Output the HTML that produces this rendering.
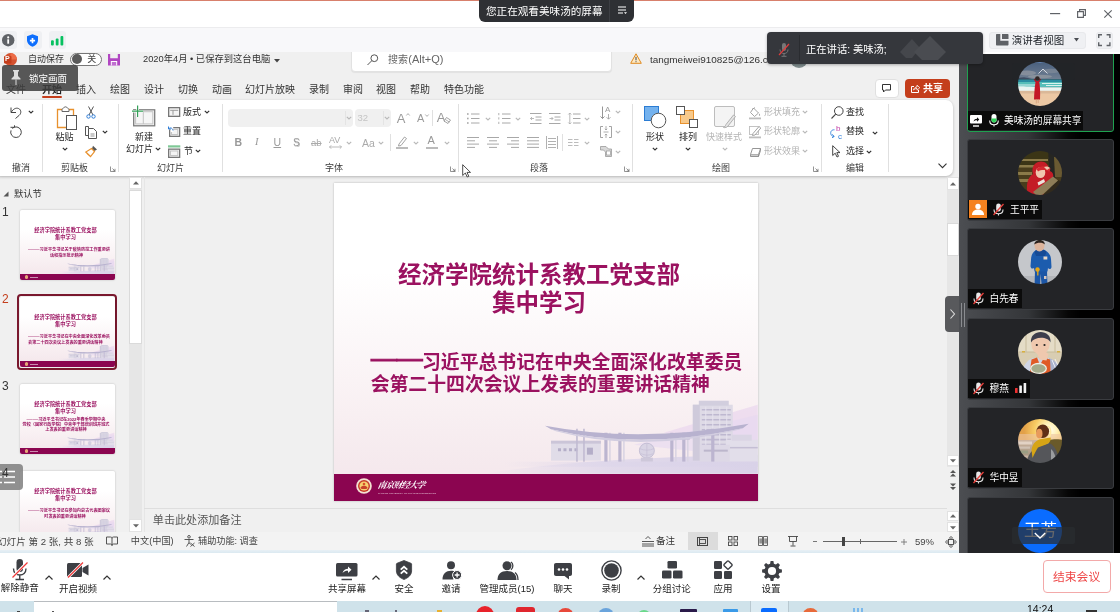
<!DOCTYPE html>
<html lang="zh-CN">
<head>
<meta charset="utf-8">
<title>Meeting</title>
<style>
*{box-sizing:border-box;margin:0;padding:0}
html,body{width:1120px;height:612px;overflow:hidden;background:#fff}
body{position:relative;font-family:"Liberation Sans","Noto Sans CJK SC",sans-serif;font-size:12px;color:#222}
.a{position:absolute}
.t{position:absolute;white-space:nowrap;line-height:1}
svg{position:absolute;overflow:visible}
#topline{left:0;top:0;width:1120px;height:1px;background:#d8806c}
#pill{left:479px;top:0;width:155px;height:22px;background:#2e3034;border-radius:0 0 6px 6px}
#graybar{left:0;top:27px;width:1120px;height:25px;background:#f8f8fa;border-top:1px solid #ececee}
#ppt{left:0;top:52px;width:959px;height:501px;background:#f0f0f0;overflow:hidden}
#ribbon{left:-6px;top:100px;width:959px;height:76px;background:#fff;border-radius:7px;box-shadow:0 1px 3px rgba(0,0,0,.25)}
.tab{top:84px;font-size:10px;color:#333}
.rt{font-size:9px;color:#262626}
.rg{font-size:9px;color:#b4b4b4}
.gl{top:164px;font-size:9px;color:#3a3a3a}
.sep{top:104px;width:1px;height:68px;background:#e0e0e0}
#side{left:959px;top:53.500px;width:161px;height:499.500px;background:linear-gradient(90deg,#4c4e52 0,#45474b 12%,#343639 43%,#060606 68%,#000 75%);overflow:hidden}
.tile{left:8px;width:147px;height:82px;background:#232427;border:1px solid #37393d;border-radius:2px}
.nm{left:1px;bottom:2px;height:19px;background:rgba(8,8,8,.8);color:#fff;font-size:10px;line-height:19px;padding:0 4px 0 24px;white-space:nowrap}
.av{left:51px;top:13px;width:44px;height:44px;border-radius:50%;overflow:hidden}
#tool{left:0;top:553px;width:1120px;height:48px;background:#fff}
.tb{font-size:10px;color:#222;top:581px;transform:translateX(-50%)}
#task{left:0;top:601px;width:1120px;height:11px;background:#cfe2ea}
</style>
</head>
<body><div id="root" class="a" style="left:0;top:0;width:1120px;height:612px;will-change:transform">
<div id="topline" class="a"></div>
<div id="pill" class="a"><span class="t" style="left:7px;top:6px;color:#fff;font-size:10.6px">您正在观看美味汤的屏幕</span><div class="a" style="left:130px;top:0;width:1px;height:22px;background:#3d3f44"></div>
<svg style="left:139px;top:6px" width="9" height="9" viewBox="0 0 9 9"><path d="M0 1H8M0 4H8M0 7H5" stroke="#fff" stroke-width="1.1" fill="none"/><path d="M6 6.3L7.5 8L9 6.3Z" fill="#fff"/></svg>
</div>
<svg style="left:1049.8px;top:13.2px" width="10.2" height="1.2" viewBox="0 0 10.2 1.2"><rect width="10.200" height="1.200" fill="#5f6267"/></svg>
<svg style="left:1077.2px;top:9.4px" width="9" height="9" viewBox="0 0 9 9"><path d="M0.600 2.600H6.400V8.400H0.600ZM2.600 2.600V0.600H8.400V6.400H6.400" fill="none" stroke="#5f6267" stroke-width="1.150"/></svg>
<svg style="left:1104px;top:10px" width="8" height="8" viewBox="0 0 8 8"><path d="M0.300 0.300L7.700 7.700M7.700 0.300L0.300 7.700" fill="none" stroke="#5f6267" stroke-width="1.150"/></svg>
<div id="graybar" class="a"></div>
<div class="a" style="left:-1px;top:31px;width:17.800px;height:18px;background:#eff0f3;border-radius:3px"></div>
<div class="a" style="left:24px;top:31px;width:17.800px;height:18px;background:#eff0f3;border-radius:3px"></div>
<div class="a" style="left:48.5px;top:31px;width:17.800px;height:18px;background:#eff0f3;border-radius:3px"></div>
<svg style="left:1.8px;top:34px" width="12.4" height="12.4" viewBox="0 0 12.4 12.4"><circle cx="6.200" cy="6.200" r="6.200" fill="#5f6267"/><rect x="5.300" y="5.300" width="1.800" height="4.400" fill="#fff"/><circle cx="6.200" cy="3.400" r="1.050" fill="#fff"/></svg>
<svg style="left:27px;top:34px" width="11" height="13" viewBox="0 0 11 13"><path d="M5.500 0.200L11 2.200V6C11 9.500 8.500 11.600 5.500 12.800C2.500 11.600 0 9.500 0 6V2.200Z" fill="#0d6efd"/><path d="M5.500 4V9.200M2.900 6.600H8.100" stroke="#fff" stroke-width="1.700"/></svg>
<svg style="left:50.9px;top:36px" width="12.4" height="9.5" viewBox="0 0 12.4 9.5"><rect x="0" y="4.300" width="2.800" height="5.200" rx="1" fill="#07c160"/><rect x="4.750" y="2.600" width="2.800" height="6.900" rx="1" fill="#07c160"/><rect x="9.500" y="0" width="2.800" height="9.500" rx="1" fill="#07c160"/></svg>
<div class="a" style="left:988.700px;top:31.500px;width:97px;height:17px;background:#eff0f3;border:1px solid #e8e9ec;border-radius:3px"></div>
<svg style="left:996.2px;top:34.4px" width="12.5" height="11.6" viewBox="0 0 12.5 11.6"><path d="M0 1C0 .4 .4 0 1 0H4.300V6.800H12.500V10.600C12.500 11.200 12.100 11.600 11.500 11.600H1C.4 11.600 0 11.200 0 10.600Z" fill="#5f6267"/><path d="M6 0H11.500C12.100 0 12.500 .4 12.500 1V5H6Z" fill="#5f6267"/></svg>
<span class="t" style="left:1011.8px;top:34.8px;font-size:10.500px;color:#1f2329">演讲者视图</span>
<svg style="left:1073.7px;top:38.2px" width="5" height="3.4" viewBox="0 0 5 3.4"><path d="M0 0H5L2.500 3.400Z" fill="#4a4d52"/></svg>
<div class="a" style="left:1095.600px;top:31.500px;width:17.200px;height:17px;background:#eff0f3;border:1px solid #e8e9ec;border-radius:3px"></div>
<svg style="left:1098px;top:34px" width="12.6" height="12.2" viewBox="0 0 12.6 12.2"><path d="M0.700 4V0.700H4M8.600 0.700H11.900V4M11.900 8.200V11.500H8.600M4 11.500H0.700V8.200" fill="none" stroke="#5f6267" stroke-width="1.400"/></svg>
<div id="ppt" class="a" style="top:52px"><div class="a" style="left:0;top:-52px;width:959px;height:553px">
<svg style="left:3.7px;top:53.3px" width="12" height="12" viewBox="0 0 12 12"><circle cx="6.500" cy="6.500" r="6.500" fill="#d35230"/><path d="M6.500 0A6.500 6.500 0 0 1 13 6.500H6.500Z" fill="#ed6c47"/><rect x="0" y="3" width="7.500" height="7.500" rx="1" fill="#c43e1c"/></svg>
<span class="t" style="left:5px;top:55.3px;font-size:7px;font-weight:bold;color:#fff">P</span>
<span class="t" style="left:28px;top:55px;font-size:9px;color:#333">自动保存</span>
<div class="a" style="left:69.500px;top:52.700px;width:32px;height:13px;border:1px solid #777;border-radius:7px;background:#fff"></div>
<div class="a" style="left:71.500px;top:54px;width:10.400px;height:10.400px;border-radius:50%;background:#5a5a5a"></div>
<span class="t" style="left:87.3px;top:55px;font-size:9px;color:#444">关</span>
<svg style="left:108px;top:53.5px" width="12" height="11.5" viewBox="0 0 12 11.5"><path d="M0 0H2.200V4.300H9.800V0H12V11.500H0Z" fill="#b146c2"/><rect x="2.800" y="7" width="6.400" height="4.500" fill="#fff"/><rect x="3.800" y="8" width="4.400" height="3.500" fill="#c070d0"/></svg>
<span class="t" style="left:143px;top:55px;font-size:9.3px;color:#333">2020年4月 • 已保存到这台电脑</span>
<svg style="left:273.5px;top:58.5px" width="5" height="4" viewBox="0 0 5 4"><path d="M0 0H6L3 3.500Z" fill="#444"/></svg>
<div class="a" style="left:350.700px;top:48px;width:261.500px;height:23.600px;background:#fff;border:1px solid #e2e2e2;border-radius:4px;box-shadow:0 1px 1px rgba(0,0,0,.06)"></div>
<svg style="left:367px;top:53.5px" width="11" height="11" viewBox="0 0 11 11"><circle cx="7.300" cy="4.200" r="3.400" fill="none" stroke="#555" stroke-width="1"/><path d="M4.900 6.600L0.500 11" stroke="#555" stroke-width="1"/></svg>
<span class="t" style="left:388px;top:54.5px;font-size:10px;color:#666">搜索</span>
<span class="t" style="left:408.3px;top:54px;font-size:11px;color:#666">(Alt+Q)</span>
<svg style="left:630px;top:53px" width="12" height="11" viewBox="0 0 12 11"><path d="M6 0.800L11.300 10.300H0.700Z" fill="#fde9c4" stroke="#e08a1e" stroke-width="1" stroke-linejoin="round"/><rect x="5.500" y="3.800" width="1" height="3.500" fill="#444"/><rect x="5.500" y="8.200" width="1" height="1" fill="#444"/></svg>
<span class="t" style="left:650px;top:55px;font-size:9.95px;color:#333">tangmeiwei910825@126.c</span>
<div class="a" style="left:790px;top:50px;width:18px;height:18px;border-radius:50%;background:#7f8c8d"></div>
<span class="t tab" style="left:6px;top:84.5px;">文件</span>
<span class="t tab" style="left:42px;top:84.5px;font-weight:bold;color:#222">开始</span>
<span class="t tab" style="left:76px;top:84.5px;">插入</span>
<span class="t tab" style="left:110px;top:84.5px;">绘图</span>
<span class="t tab" style="left:144px;top:84.5px;">设计</span>
<span class="t tab" style="left:178px;top:84.5px;">切换</span>
<span class="t tab" style="left:212px;top:84.5px;">动画</span>
<span class="t tab" style="left:245px;top:84.5px;">幻灯片放映</span>
<span class="t tab" style="left:309px;top:84.5px;">录制</span>
<span class="t tab" style="left:343px;top:84.5px;">审阅</span>
<span class="t tab" style="left:376px;top:84.5px;">视图</span>
<span class="t tab" style="left:410px;top:84.5px;">帮助</span>
<span class="t tab" style="left:444px;top:84.5px;">特色功能</span>
<div class="a" style="left:42px;top:96px;width:20px;height:2px;background:#c43e1c;border-radius:1px"></div>
<div class="a" style="left:875px;top:79px;width:24px;height:19px;background:#fff;border:1px solid #e0e0e0;border-radius:4px"></div>
<svg style="left:882px;top:84px" width="9" height="9" viewBox="0 0 9 9"><path d="M0.500 0.500H8.500V6H3.500L1.500 8V6H0.500Z" fill="none" stroke="#333" stroke-width="1"/></svg>
<div class="a" style="left:905px;top:79px;width:45px;height:19px;background:#c43e1c;border-radius:4px"></div>
<svg style="left:911px;top:84px" width="9" height="9" viewBox="0 0 9 9"><path d="M3 2.500H0.500V8.500H7.500V6" fill="none" stroke="#fff" stroke-width="1"/><path d="M2.500 6C3 4 4.500 3 6 3V1.200L8.800 3.700L6 6.200V4.500C4.500 4.500 3.500 5 2.500 6Z" fill="none" stroke="#fff" stroke-width=".8"/></svg>
<span class="t" style="left:923px;top:83.5px;font-size:10px;font-weight:bold;color:#fff">共享</span>
<div id="ribbon" class="a"></div>
<svg style="left:10px;top:106px" width="13" height="13" viewBox="0 0 13 13"><path d="M1 1.500V6.500H6" fill="none" stroke="#444" stroke-width="1"/><path d="M1.300 6.200C3 3 6 1.500 8.500 2.500C11.500 3.800 11.500 7.500 9 9.500L5.500 12.500" fill="none" stroke="#444" stroke-width="1"/></svg>
<svg style="left:27.5px;top:110px" width="6" height="4" viewBox="0 0 6 4"><path d="M0.8 0.8L3 3L5.2 0.8" fill="none" stroke="#333" stroke-width="1.150"/></svg>
<svg style="left:10px;top:125px" width="13" height="14" viewBox="0 0 13 14"><path d="M2.25 3.45A5.3 5.3 0 1 1 1.02 5.39" fill="none" stroke="#444" stroke-width="1"/><path d="M0.500 2.300H4.500V0.300" fill="none" stroke="#444" stroke-width="1"/></svg>
<span class="t gl" style="left:12px;top:164px;">撤消</span>
<div class="a sep" style="left:42px"></div>
<svg style="left:56px;top:106px" width="22" height="25" viewBox="0 0 22 25"><path d="M6.500 3.500H1.500V21.500H10" fill="none" stroke="#e8912d" stroke-width="1.300"/><path d="M12.500 3.500H17.500V9" fill="none" stroke="#e8912d" stroke-width="1.300"/><path d="M6 5.500V3.500C6 2.500 7.500 2.500 7.800 1.800C8 0.500 11 0.500 11.200 1.800C11.500 2.500 13 2.500 13 3.500V5.500Z" fill="#fff" stroke="#666" stroke-width="1"/><rect x="10.500" y="9.500" width="10" height="14" fill="#fff" stroke="#555" stroke-width="1"/></svg>
<span class="t rt" style="left:55.5px;top:132.5px;">粘贴</span>
<svg style="left:62px;top:147px" width="6" height="4" viewBox="0 0 6 4"><path d="M0.8 0.8L3 3L5.2 0.8" fill="none" stroke="#333" stroke-width="1.150"/></svg>
<svg style="left:86px;top:106px" width="10" height="13" viewBox="0 0 10 13"><path d="M2.500 0.500L7 9M7.500 0.500L3 9" stroke="#555" stroke-width="1" fill="none"/><circle cx="2.500" cy="10.500" r="1.700" fill="none" stroke="#2f7ed8" stroke-width="1"/><circle cx="7.500" cy="10.500" r="1.700" fill="none" stroke="#2f7ed8" stroke-width="1"/></svg>
<svg style="left:85px;top:126px" width="12" height="13" viewBox="0 0 12 13"><path d="M3.500 2.500V0.500H0.500V9.500H3.500" fill="none" stroke="#555" stroke-width="1"/><path d="M3.500 2.500H8.500L11.500 5.500V12.500H3.500Z" fill="#fff" stroke="#555" stroke-width="1"/><path d="M5.500 8H9.500M5.500 10H9.500" stroke="#777" stroke-width=".8"/></svg>
<svg style="left:102px;top:130px" width="6" height="4" viewBox="0 0 6 4"><path d="M0.8 0.8L3 3L5.2 0.8" fill="none" stroke="#333" stroke-width="1.150"/></svg>
<svg style="left:85px;top:145px" width="13" height="13" viewBox="0 0 13 13"><path d="M8 0.800L12 4.500L9.500 6L7 3.500Z" fill="#555"/><path d="M6.500 3.500L9.500 6.500L5.500 11.500L0.800 7Z" fill="#fff" stroke="#e8912d" stroke-width="1.200"/><path d="M2 8.500L5 11" stroke="#e8912d" stroke-width="1"/></svg>
<span class="t gl" style="left:61px;top:164px;">剪贴板</span>
<svg style="left:109.5px;top:166px" width="6" height="6" viewBox="0 0 6 6"><path d="M0.500 0.500V5.500H5.500M2.500 2.500L5 5M5 2.800V5H2.800" fill="none" stroke="#777" stroke-width=".8"/></svg>
<div class="a sep" style="left:118px"></div>
<svg style="left:131px;top:104.5px" width="25" height="22" viewBox="0 0 25 22"><rect x="2.700" y="4.800" width="21" height="16" fill="#f6f6f6" stroke="#7c7c7c" stroke-width="1.300"/><rect x="4.600" y="6.700" width="17.200" height="12.200" fill="none" stroke="#c4c4c4" stroke-width="1"/><path d="M12.300 7V19" stroke="#c4c4c4" stroke-width="1"/><path d="M6.600 0.500V12M1 6.200H12.200" stroke="#fff" stroke-width="2.600"/><path d="M6.600 0.500V12M1 6.200H12.200" stroke="#35a058" stroke-width="1.200"/></svg>
<span class="t rt" style="left:135px;top:132.5px;">新建</span>
<span class="t rt" style="left:126px;top:144.5px;">幻灯片</span>
<svg style="left:155px;top:147px" width="6" height="4" viewBox="0 0 6 4"><path d="M0.8 0.8L3 3L5.2 0.8" fill="none" stroke="#333" stroke-width="1.150"/></svg>
<svg style="left:168px;top:107px" width="12.5" height="10" viewBox="0 0 12.5 10"><rect x="0.650" y="0.650" width="11" height="8.700" fill="#f4f4f4" stroke="#777" stroke-width="1.300"/><path d="M2.200 3.300H10.200M5 3.300V7.800" stroke="#9a9a9a" stroke-width="1"/></svg>
<span class="t rt" style="left:183px;top:107.5px;">版式</span>
<svg style="left:204px;top:110px" width="6" height="4" viewBox="0 0 6 4"><path d="M0.8 0.8L3 3L5.2 0.8" fill="none" stroke="#333" stroke-width="1.150"/></svg>
<svg style="left:168px;top:126px" width="12.5" height="11" viewBox="0 0 12.5 11"><rect x="1.650" y="1.650" width="10" height="8.700" fill="#f4f4f4" stroke="#777" stroke-width="1.300"/><rect x="3.500" y="3.500" width="6.300" height="5" fill="none" stroke="#c0c0c0" stroke-width=".9"/><path d="M0 2.200H4V6" stroke="#fff" stroke-width="2.400" fill="none"/><path d="M0.800 2.800C2 1.200 4.500 1.800 5 4.500M0.500 0.500V3H3" fill="none" stroke="#2f7ed8" stroke-width="1"/></svg>
<span class="t rt" style="left:183px;top:127px;">重置</span>
<svg style="left:168px;top:145px" width="12.5" height="13" viewBox="0 0 12.5 13"><rect x="0" y="0.300" width="12.300" height="2.200" fill="#7fc896"/><rect x="0.650" y="4.150" width="11" height="8.200" fill="#f4f4f4" stroke="#777" stroke-width="1.300"/><rect x="2.500" y="6" width="7.300" height="4.500" fill="none" stroke="#c0c0c0" stroke-width=".9"/></svg>
<span class="t rt" style="left:184px;top:146.5px;">节</span>
<svg style="left:195px;top:149px" width="6" height="4" viewBox="0 0 6 4"><path d="M0.8 0.8L3 3L5.2 0.8" fill="none" stroke="#333" stroke-width="1.150"/></svg>
<span class="t gl" style="left:157px;top:164px;">幻灯片</span>
<div class="a sep" style="left:222px"></div>
<div class="a" style="left:228px;top:109px;width:125px;height:18px;background:#f0f0f0;border-radius:4px"></div>
<div class="a" style="left:345px;top:111px;width:1px;height:14px;background:#e4e4e4"></div>
<svg style="left:346px;top:116px" width="6" height="4" viewBox="0 0 6 4"><path d="M0.8 0.8L3 3L5.2 0.8" fill="none" stroke="#b9b9b9" stroke-width="1.150"/></svg>
<div class="a" style="left:355px;top:109px;width:36px;height:18px;background:#f0f0f0;border-radius:4px"></div>
<span class="t" style="left:357.5px;top:113px;font-size:9.5px;color:#c4c4c4">32</span>
<div class="a" style="left:383px;top:111px;width:1px;height:14px;background:#e4e4e4"></div>
<svg style="left:384px;top:116px" width="6" height="4" viewBox="0 0 6 4"><path d="M0.8 0.8L3 3L5.2 0.8" fill="none" stroke="#b9b9b9" stroke-width="1.150"/></svg>
<span class="t" style="left:396.8px;top:111.5px;font-size:13px;color:#9a9a9a">A</span>
<svg style="left:405.5px;top:112.5px" width="4" height="3" viewBox="0 0 4 3"><path d="M0.300 2.500L2 0.600L3.700 2.500" fill="none" stroke="#9a9a9a" stroke-width=".8"/></svg>
<span class="t" style="left:417px;top:113px;font-size:11px;color:#9a9a9a">A</span>
<svg style="left:424.5px;top:113.5px" width="4" height="3" viewBox="0 0 4 3"><path d="M0.300 0.500L2 2.400L3.700 0.500" fill="none" stroke="#9a9a9a" stroke-width=".8"/></svg>
<div class="a" style="left:432px;top:110px;width:1px;height:16px;background:#e0e0e0"></div>
<span class="t" style="left:436.8px;top:111px;font-size:13px;color:#9a9a9a">A</span>
<svg style="left:443px;top:117px" width="8" height="7" viewBox="0 0 8 7"><path d="M3.500 0.500L7.500 3L5 6.500L1 4Z" fill="#fff" stroke="#9a9a9a" stroke-width=".9"/><path d="M2.300 2.500L6.300 5" stroke="#9a9a9a" stroke-width=".8"/></svg>
<span class="t" style="left:234.5px;top:137px;font-size:10.5px;color:#999;font-weight:bold">B</span>
<span class="t" style="left:255px;top:137px;font-size:10.5px;color:#999;font-style:italic;font-family:'Liberation Serif',serif">I</span>
<span class="t" style="left:273.5px;top:137px;font-size:10.5px;color:#999;text-decoration:underline">U</span>
<span class="t" style="left:293px;top:137px;font-size:10.5px;color:#999;text-shadow:0.500px 0.500px 0 #ccc">S</span>
<span class="t" style="left:311px;top:138px;font-size:9.5px;color:#aaa;text-decoration:line-through">ab</span>
<span class="t" style="left:329px;top:135.5px;font-size:9px;color:#aaa">AV</span>
<svg style="left:329px;top:145px" width="13" height="4" viewBox="0 0 13 4"><path d="M0.500 2H12.500M2.200 0.300L0.500 2L2.200 3.700M10.800 0.300L12.500 2L10.800 3.700" fill="none" stroke="#aaa" stroke-width=".8"/></svg>
<svg style="left:345.5px;top:141px" width="6" height="4" viewBox="0 0 6 4"><path d="M0.8 0.8L3 3L5.2 0.8" fill="none" stroke="#b9b9b9" stroke-width="1.150"/></svg>
<span class="t" style="left:362px;top:137.5px;font-size:10.5px;color:#aaa">Aa</span>
<svg style="left:378px;top:141px" width="6" height="4" viewBox="0 0 6 4"><path d="M0.8 0.8L3 3L5.2 0.8" fill="none" stroke="#b9b9b9" stroke-width="1.150"/></svg>
<div class="a" style="left:390px;top:134px;width:1px;height:17px;background:#e0e0e0"></div>
<svg style="left:396px;top:136px" width="12" height="13" viewBox="0 0 12 13"><path d="M3 8L8.500 1L10.500 2.500L5 9.500L2.500 10Z" fill="#fff" stroke="#999" stroke-width=".9"/><rect x="0" y="11" width="12" height="2" fill="#bbb"/></svg>
<svg style="left:412.5px;top:141px" width="6" height="4" viewBox="0 0 6 4"><path d="M0.8 0.8L3 3L5.2 0.8" fill="none" stroke="#b9b9b9" stroke-width="1.150"/></svg>
<span class="t" style="left:427.5px;top:135px;font-size:11px;color:#999">A</span>
<div class="a" style="left:426px;top:147px;width:12px;height:2px;background:#bbb"></div>
<svg style="left:443.5px;top:141px" width="6" height="4" viewBox="0 0 6 4"><path d="M0.8 0.8L3 3L5.2 0.8" fill="none" stroke="#b9b9b9" stroke-width="1.150"/></svg>
<span class="t gl" style="left:325px;top:164px;">字体</span>
<svg style="left:450px;top:166px" width="6" height="6" viewBox="0 0 6 6"><path d="M0.500 0.500V5.500H5.500M2.500 2.500L5 5M5 2.800V5H2.800" fill="none" stroke="#777" stroke-width=".8"/></svg>
<div class="a sep" style="left:458px"></div>
<svg style="left:467px;top:113px" width="13" height="11" viewBox="0 0 13 11"><path d="M4 1H12.500M4 5.500H12.500M4 10H12.500" stroke="#a8a8a8" stroke-width="1"/><rect x="0" y="0.200" width="1.600" height="1.600" fill="#a8a8a8"/><rect x="0" y="4.700" width="1.600" height="1.600" fill="#a8a8a8"/><rect x="0" y="9.200" width="1.600" height="1.600" fill="#a8a8a8"/></svg>
<svg style="left:484.5px;top:116.5px" width="6" height="4" viewBox="0 0 6 4"><path d="M0.8 0.8L3 3L5.2 0.8" fill="none" stroke="#b9b9b9" stroke-width="1.150"/></svg>
<svg style="left:498px;top:113px" width="13" height="11" viewBox="0 0 13 11"><path d="M4 1H12.500M4 5.500H12.500M4 10H12.500" stroke="#a8a8a8" stroke-width="1"/><path d="M0.800 0V2.200M0.800 4.300V6.500M0.800 8.800V11" stroke="#a8a8a8" stroke-width=".9"/></svg>
<svg style="left:515px;top:116.5px" width="6" height="4" viewBox="0 0 6 4"><path d="M0.8 0.8L3 3L5.2 0.8" fill="none" stroke="#b9b9b9" stroke-width="1.150"/></svg>
<svg style="left:530px;top:113px" width="12" height="11" viewBox="0 0 12 11"><path d="M0 0.500H11.500M5.500 4H11.500M5.500 7H11.500M0 10.500H11.500" stroke="#a8a8a8" stroke-width="1"/><path d="M4 5.500H0.500M2 4L0.500 5.500L2 7" fill="none" stroke="#a8a8a8" stroke-width=".8"/></svg>
<svg style="left:549px;top:113px" width="12" height="11" viewBox="0 0 12 11"><path d="M0 0.500H11.500M5.500 4H11.500M5.500 7H11.500M0 10.500H11.500" stroke="#a8a8a8" stroke-width="1"/><path d="M0.500 5.500H4M2.500 4L4 5.500L2.500 7" fill="none" stroke="#a8a8a8" stroke-width=".8"/></svg>
<svg style="left:568px;top:112px" width="13" height="13" viewBox="0 0 13 13"><path d="M5 2H12.500M5 6.500H12.500M5 11H12.500" stroke="#a8a8a8" stroke-width="1"/><path d="M1.800 1V12M0.300 2.500L1.800 1L3.300 2.500M0.300 10.500L1.800 12L3.300 10.500" fill="none" stroke="#a8a8a8" stroke-width=".8"/></svg>
<svg style="left:584px;top:116.5px" width="6" height="4" viewBox="0 0 6 4"><path d="M0.8 0.8L3 3L5.2 0.8" fill="none" stroke="#b9b9b9" stroke-width="1.150"/></svg>
<svg style="left:600px;top:106px" width="12" height="14" viewBox="0 0 12 14"><path d="M2.500 0.500V12.500M0.500 10.500L2.500 12.500L4.500 10.500" fill="none" stroke="#8a8a8a" stroke-width=".9"/><path d="M8 12.500V3M6 5L8 3L10 5" fill="none" stroke="#aaa" stroke-width=".8" opacity="0"/></svg>
<span class="t" style="left:605px;top:106px;font-size:8px;color:#9a9a9a">A</span>
<svg style="left:606px;top:114px" width="5" height="6" viewBox="0 0 5 6"><path d="M2.500 0V5M0.500 3.200L2.500 5.200L4.500 3.200" fill="none" stroke="#9a9a9a" stroke-width=".8"/></svg>
<svg style="left:615px;top:110px" width="6" height="4" viewBox="0 0 6 4"><path d="M0.8 0.8L3 3L5.2 0.8" fill="none" stroke="#b9b9b9" stroke-width="1.150"/></svg>
<svg style="left:600px;top:126px" width="12" height="12" viewBox="0 0 12 12"><path d="M3 0.500H0.500V11.500H3M9 0.500H11.500V11.500H9" fill="none" stroke="#9a9a9a" stroke-width=".9"/><path d="M6 0V4M6 12V8M3.500 6H8.500M4.800 2.800L6 4L7.200 2.800M4.800 9.200L6 8L7.200 9.200" fill="none" stroke="#9a9a9a" stroke-width=".8"/></svg>
<svg style="left:615px;top:130px" width="6" height="4" viewBox="0 0 6 4"><path d="M0.8 0.8L3 3L5.2 0.8" fill="none" stroke="#b9b9b9" stroke-width="1.150"/></svg>
<svg style="left:600px;top:146px" width="13" height="11" viewBox="0 0 13 11"><path d="M0.500 0.500H6L8.500 3H11.500V10.500H5.500V6L3.500 4H0.500Z" fill="#d8d8d8" stroke="#9a9a9a" stroke-width=".8"/><rect x="6.500" y="5" width="4" height="4" fill="#fff" stroke="#9a9a9a" stroke-width=".7"/></svg>
<svg style="left:615px;top:149.5px" width="6" height="4" viewBox="0 0 6 4"><path d="M0.8 0.8L3 3L5.2 0.8" fill="none" stroke="#b9b9b9" stroke-width="1.150"/></svg>
<svg style="left:467px;top:137px" width="13" height="12" viewBox="0 0 13 12"><path d="M0 0.5H12M0 3.8H8M0 7.1H12M0 10.4H8" stroke="#a8a8a8" stroke-width="1" fill="none"/></svg>
<svg style="left:487px;top:137px" width="13" height="12" viewBox="0 0 13 12"><path d="M0 0.5H12M2 3.8H10M0 7.1H12M2 10.4H10" stroke="#a8a8a8" stroke-width="1" fill="none"/></svg>
<svg style="left:507px;top:137px" width="13" height="12" viewBox="0 0 13 12"><path d="M0 0.5H12M4 3.8H12M0 7.1H12M4 10.4H12" stroke="#a8a8a8" stroke-width="1" fill="none"/></svg>
<svg style="left:527px;top:137px" width="13" height="12" viewBox="0 0 13 12"><path d="M0 0.5H12M0 3.8H12M0 7.1H12M0 10.4H12" stroke="#a8a8a8" stroke-width="1" fill="none"/></svg>
<svg style="left:546px;top:136px" width="12" height="13" viewBox="0 0 12 13"><path d="M0.500 0V13M11.500 0V13" stroke="#a8a8a8" stroke-width=".9"/><path d="M2 2.500H10M2 5.500H10M2 8.500H10M2 11.500H10" stroke="#a8a8a8" stroke-width=".9"/></svg>
<div class="a" style="left:562px;top:134px;width:1px;height:17px;background:#e0e0e0"></div>
<svg style="left:568px;top:139px" width="11" height="7" viewBox="0 0 11 7"><path d="M0 0.500H4.500M0 3.500H4.500M0 6.500H4.500M6 0.500H10.500M6 3.500H10.500M6 6.500H10.500" stroke="#bcbcbc" stroke-width="1"/></svg>
<svg style="left:584px;top:141px" width="6" height="4" viewBox="0 0 6 4"><path d="M0.8 0.8L3 3L5.2 0.8" fill="none" stroke="#b9b9b9" stroke-width="1.150"/></svg>
<span class="t gl" style="left:530px;top:164px;">段落</span>
<svg style="left:624px;top:166px" width="6" height="6" viewBox="0 0 6 6"><path d="M0.500 0.500V5.500H5.500M2.500 2.500L5 5M5 2.800V5H2.800" fill="none" stroke="#777" stroke-width=".8"/></svg>
<div class="a sep" style="left:632px"></div>
<svg style="left:644px;top:106px" width="23" height="23" viewBox="0 0 23 23"><rect x="0.500" y="0.500" width="14" height="14" fill="#74b2ee" stroke="#2b7cd3" stroke-width="1"/><circle cx="14.500" cy="14.500" r="7.300" fill="#fff" stroke="#555" stroke-width="1"/></svg>
<span class="t rt" style="left:646px;top:132.5px;">形状</span>
<svg style="left:652px;top:147px" width="6" height="4" viewBox="0 0 6 4"><path d="M0.8 0.8L3 3L5.2 0.8" fill="none" stroke="#333" stroke-width="1.150"/></svg>
<svg style="left:676px;top:106px" width="23" height="23" viewBox="0 0 23 23"><rect x="4.500" y="4.500" width="13" height="13" fill="#f8c98a" stroke="#e8912d" stroke-width="1"/><rect x="0.500" y="0.500" width="8" height="8" fill="#fff" stroke="#555" stroke-width="1"/><rect x="13.500" y="13.500" width="8" height="8" fill="#fff" stroke="#555" stroke-width="1"/></svg>
<span class="t rt" style="left:679px;top:132.5px;">排列</span>
<svg style="left:685px;top:147px" width="6" height="4" viewBox="0 0 6 4"><path d="M0.8 0.8L3 3L5.2 0.8" fill="none" stroke="#333" stroke-width="1.150"/></svg>
<svg style="left:714px;top:106px" width="22" height="23" viewBox="0 0 22 23"><rect x="0.500" y="0.500" width="20" height="20" rx="1.500" fill="#f4f4f4" stroke="#bdbdbd" stroke-width="1"/><path d="M19.500 9L21.500 10.500L14 20C13 21.300 11 22 9.500 21.500C11 21 11.500 19.500 12 18.500Z" fill="#e6e6e6" stroke="#a9a9a9" stroke-width=".9"/></svg>
<span class="t rg" style="left:706px;top:132.5px;">快速样式</span>
<svg style="left:722px;top:147px" width="6" height="4" viewBox="0 0 6 4"><path d="M0.8 0.8L3 3L5.2 0.8" fill="none" stroke="#b9b9b9" stroke-width="1.150"/></svg>
<svg style="left:749px;top:106.5px" width="13" height="12" viewBox="0 0 13 12"><path d="M4.500 1L9.500 6L5.500 9.500L1.500 5.500Z" fill="#fff" stroke="#9a9a9a" stroke-width=".9"/><path d="M3 2.500L6 0.500" stroke="#9a9a9a" stroke-width=".8"/><path d="M10.500 6.500C11.300 7.800 11.300 8.800 10.500 8.800C9.700 8.800 9.700 7.800 10.500 6.500Z" fill="#9a9a9a"/><rect x="0" y="10.500" width="12" height="1.800" fill="#bdbdbd"/></svg>
<span class="t rg" style="left:764px;top:107.5px;">形状填充</span>
<svg style="left:802px;top:110px" width="6" height="4" viewBox="0 0 6 4"><path d="M0.8 0.8L3 3L5.2 0.8" fill="none" stroke="#b9b9b9" stroke-width="1.150"/></svg>
<svg style="left:749px;top:126px" width="13" height="12" viewBox="0 0 13 12"><rect x="0.500" y="0.500" width="9" height="8" fill="none" stroke="#bdbdbd" stroke-width=".9"/><path d="M4 7.500L10 0.500L11.800 2L6 9L3.500 9.500Z" fill="#fff" stroke="#9a9a9a" stroke-width=".9"/><rect x="0" y="10.500" width="12" height="1.800" fill="#bdbdbd"/></svg>
<span class="t rg" style="left:764px;top:127px;">形状轮廓</span>
<svg style="left:802px;top:129.5px" width="6" height="4" viewBox="0 0 6 4"><path d="M0.8 0.8L3 3L5.2 0.8" fill="none" stroke="#b9b9b9" stroke-width="1.150"/></svg>
<svg style="left:749px;top:145.5px" width="13" height="12" viewBox="0 0 13 12"><path d="M3.500 2.500H11.500L9.500 8.500H1.500Z" fill="#fff" stroke="#8a8a8a" stroke-width=".9"/><path d="M1.500 8.500V10.500H9.500V8.500M9.500 10.500L11.500 4.500V2.500" fill="#ccc" stroke="#8a8a8a" stroke-width=".9"/></svg>
<span class="t rg" style="left:764px;top:146.5px;">形状效果</span>
<svg style="left:802px;top:149px" width="6" height="4" viewBox="0 0 6 4"><path d="M0.8 0.8L3 3L5.2 0.8" fill="none" stroke="#b9b9b9" stroke-width="1.150"/></svg>
<span class="t gl" style="left:712px;top:164px;">绘图</span>
<svg style="left:813px;top:166px" width="6" height="6" viewBox="0 0 6 6"><path d="M0.500 0.500V5.500H5.500M2.500 2.500L5 5M5 2.800V5H2.800" fill="none" stroke="#777" stroke-width=".8"/></svg>
<div class="a sep" style="left:821px"></div>
<svg style="left:831px;top:106px" width="13" height="13" viewBox="0 0 13 13"><circle cx="7.800" cy="5" r="4.300" fill="none" stroke="#444" stroke-width="1"/><path d="M4.700 8.200L0.500 12.500" stroke="#444" stroke-width="1.100"/></svg>
<span class="t rt" style="left:846px;top:107.5px;">查找</span>
<span class="t" style="left:836px;top:124.5px;font-size:8px;color:#c23fa6">b</span>
<span class="t" style="left:838px;top:132.5px;font-size:8px;color:#2f7ed8">c</span>
<svg style="left:830px;top:129px" width="8" height="9" viewBox="0 0 8 9"><path d="M4.500 0.800C1.500 0.500 0 3 1 5.500C1.500 6.800 2.800 7.500 4 7.500M2.300 5.300L4.200 7.500L2 8.800" fill="none" stroke="#2f7ed8" stroke-width=".9"/></svg>
<span class="t rt" style="left:846px;top:127px;">替换</span>
<svg style="left:872px;top:130.5px" width="6" height="4" viewBox="0 0 6 4"><path d="M0.8 0.8L3 3L5.2 0.8" fill="none" stroke="#333" stroke-width="1.150"/></svg>
<svg style="left:832px;top:145px" width="9" height="13" viewBox="0 0 9 13"><path d="M0.700 0.700V10.500L3.200 8.200L5 12L6.500 11.300L4.800 7.600H8Z" fill="#fff" stroke="#333" stroke-width=".9" stroke-linejoin="round"/></svg>
<span class="t rt" style="left:846px;top:146.5px;">选择</span>
<svg style="left:866px;top:149.5px" width="6" height="4" viewBox="0 0 6 4"><path d="M0.8 0.8L3 3L5.2 0.8" fill="none" stroke="#333" stroke-width="1.150"/></svg>
<span class="t gl" style="left:846px;top:164px;">编辑</span>
<div class="a sep" style="left:888px"></div>
<svg style="left:938px;top:163px" width="9" height="6" viewBox="0 0 9 6"><path d="M0.500 0.700L4.500 4.700L8.500 0.700" fill="none" stroke="#333" stroke-width="1.100"/></svg>
<svg style="left:462px;top:164px" width="9" height="14" viewBox="0 0 9 14"><path d="M0.700 0.700V11.500L3.300 9L5.200 13L6.800 12.300L5 8.400H8.500Z" fill="#fff" stroke="#222" stroke-width=".8" stroke-linejoin="round"/></svg>
<div class="a" style="left:2px;top:65px;width:76px;height:26px;background:rgba(62,62,62,.86);border-radius:3px"></div>
<svg style="left:11px;top:70px" width="10" height="15" viewBox="0 0 10 15"><path d="M2 0H8V1.500H7V6L9.500 8.500V9.500H0.500V8.500L3 6V1.500H2Z" fill="#ddd"/><path d="M5 9.500V15" stroke="#ddd" stroke-width="1"/></svg>
<span class="t" style="left:29px;top:74px;font-size:9.5px;color:#fff">锁定画面</span>
<svg style="left:3px;top:191px" width="6" height="6" viewBox="0 0 6 6"><path d="M5.500 0.500V5.500H0.500Z" fill="#555"/></svg>
<span class="t" style="left:14px;top:190.3px;font-size:9.300px;color:#333">默认节</span>
<span class="t" style="left:2px;top:206px;font-size:12px;color:#333">1</span>
<div class="a" style="left:20px;top:210px;width:95px;height:70px;background:linear-gradient(#fff 0,#fff 28%,#faf3f5 62%,#f3e5ea 100%);overflow:hidden;border-radius:2px;box-shadow:0 0 2px rgba(0,0,0,.25)">
<svg style="left:0;top:0" width="95" height="70" viewBox="0 0 424 318"><defs><linearGradient id="fadeL" x1="0" y1="0" x2="1" y2="0"><stop offset="0" stop-color="#ddd6ea" stop-opacity="0"/><stop offset=".45" stop-color="#ddd6ea" stop-opacity=".8"/><stop offset="1" stop-color="#d9d2e8"/></linearGradient></defs><path d="M424 222L330 250L424 262Z" fill="#ead6ee" opacity=".7"/>
<path d="M424 232L300 262L424 275Z" fill="#e6d8f0" opacity=".6"/>
<path d="M150 291C230 278 330 274 424 272V291H150Z" fill="url(#fadeL)"/>
<rect x="359" y="222" width="40" height="56" fill="#dedae6"/><rect x="365" y="218" width="30" height="5" fill="#d2cede"/><rect x="359" y="222" width="7" height="56" fill="#cfcadb"/>
<path d="M368 227H397M368 232H397M368 237H397M368 242H397M368 247H397M368 252H397M368 257H397M368 262H397M368 267H397" stroke="#beb8d0" stroke-width="1.600"/>
<path d="M372 224V272M379 224V272M386 224V272M393 224V272" stroke="#e6e2ee" stroke-width="1"/>
<rect x="392" y="257" width="32" height="22" fill="#e2deea"/><rect x="398" y="252" width="20" height="6" fill="#dad5e4"/>
<path d="M396 265H424" stroke="#c4bed4" stroke-width="1.500"/>
<rect x="366" y="262" width="30" height="17" fill="#ddd8e6"/><path d="M370 268H394" stroke="#bcb6cc" stroke-width="2"/>
<rect x="217" y="260" width="50" height="18" fill="#e0dce8"/><rect x="217" y="258" width="50" height="3" fill="#cbc5d8"/><path d="M224 267H246" stroke="#b4aec8" stroke-width="3" stroke-dasharray="3 2.500"/><rect x="253" y="265" width="6" height="7" fill="#b4aec8"/>
<path d="M243 246V279M250 246V279" stroke="#c1bbd2" stroke-width="1.600"/>
<path d="M272 250V279M286 250V279M338 250V279M350 250V279M379 246V279" stroke="#bcb5d0" stroke-width="3.200"/>
<path d="M276 250V279M290 250V279M342 250V279M354 250V279" stroke="#d8d3e2" stroke-width="1.500"/>
<path d="M270 256H292M336 256H356" stroke="#c8c2d8" stroke-width="2"/>
<circle cx="313" cy="268" r="7.500" fill="#d9d4e4" stroke="#bdb7cf" stroke-width=".8"/><path d="M306 266C310 268 316 268 320 266M307 271C311 273 316 273 319 271M313 260.500V275.500" stroke="#c2bcd4" stroke-width=".6" fill="none"/><rect x="307" y="275" width="12" height="4" fill="#cec8da"/>
<path d="M211 243Q306 261 415 241L409 245.500Q306 268 217 246.500Z" fill="#b8b2cf"/>
<path d="M217 246.500Q306 268 409 245.500L405 247Q306 271 222 248.500Z" fill="#d2cde0"/>
<path d="M170 279H424V284H170Z" fill="url(#fadeL)"/>
</svg>
<div class="a" style="left:0;bottom:0;width:100%;height:6.04953px;background:#8b0550"></div>
<div class="a" style="left:4.92925px;bottom:1.45637px;width:3.36085px;height:3.36085px;border-radius:50%;background:#e6a878"></div>
<div class="a" style="left:9.85849px;bottom:2.46462px;width:8.51415px;height:0.896226px;background:rgba(255,255,255,.55)"></div>
</div>
<span class="t" style="left:65.5px;top:227.8px;font-size:5.2px;font-weight:bold;color:#9b1260;transform:translateX(-50%)">经济学院统计系教工党支部</span>
<span class="t" style="left:65.5px;top:234.8px;font-size:5.2px;font-weight:bold;color:#9b1260;transform:translateX(-50%)">集中学习</span>
<span class="t" style="left:28px;top:247.7px;font-size:4.15px;font-weight:bold;color:#9b1260"><span style="display:inline-block;width:11.62px"><span style="display:inline-block;transform:translateY(-0.900px) scaleX(1.400);transform-origin:0 50%">——</span></span>习近平总书记关于疫情防控工作重要讲</span>
<span class="t" style="left:66.5px;top:253.8px;font-size:4.15px;font-weight:bold;color:#9b1260;transform:translateX(-50%)">话和指示批示精神</span>
<span class="t" style="left:2px;top:293px;font-size:12px;color:#c43e1c">2</span>
<div class="a" style="left:17px;top:294px;width:100px;height:76px;border:2px solid #7a182e;border-radius:4px;background:#fff"></div>
<div class="a" style="left:20px;top:297px;width:95px;height:70px;background:linear-gradient(#fff 0,#fff 28%,#faf3f5 62%,#f3e5ea 100%);overflow:hidden;border-radius:2px;box-shadow:0 0 2px rgba(0,0,0,.25)">
<svg style="left:0;top:0" width="95" height="70" viewBox="0 0 424 318"><defs><linearGradient id="fadeL" x1="0" y1="0" x2="1" y2="0"><stop offset="0" stop-color="#ddd6ea" stop-opacity="0"/><stop offset=".45" stop-color="#ddd6ea" stop-opacity=".8"/><stop offset="1" stop-color="#d9d2e8"/></linearGradient></defs><path d="M424 222L330 250L424 262Z" fill="#ead6ee" opacity=".7"/>
<path d="M424 232L300 262L424 275Z" fill="#e6d8f0" opacity=".6"/>
<path d="M150 291C230 278 330 274 424 272V291H150Z" fill="url(#fadeL)"/>
<rect x="359" y="222" width="40" height="56" fill="#dedae6"/><rect x="365" y="218" width="30" height="5" fill="#d2cede"/><rect x="359" y="222" width="7" height="56" fill="#cfcadb"/>
<path d="M368 227H397M368 232H397M368 237H397M368 242H397M368 247H397M368 252H397M368 257H397M368 262H397M368 267H397" stroke="#beb8d0" stroke-width="1.600"/>
<path d="M372 224V272M379 224V272M386 224V272M393 224V272" stroke="#e6e2ee" stroke-width="1"/>
<rect x="392" y="257" width="32" height="22" fill="#e2deea"/><rect x="398" y="252" width="20" height="6" fill="#dad5e4"/>
<path d="M396 265H424" stroke="#c4bed4" stroke-width="1.500"/>
<rect x="366" y="262" width="30" height="17" fill="#ddd8e6"/><path d="M370 268H394" stroke="#bcb6cc" stroke-width="2"/>
<rect x="217" y="260" width="50" height="18" fill="#e0dce8"/><rect x="217" y="258" width="50" height="3" fill="#cbc5d8"/><path d="M224 267H246" stroke="#b4aec8" stroke-width="3" stroke-dasharray="3 2.500"/><rect x="253" y="265" width="6" height="7" fill="#b4aec8"/>
<path d="M243 246V279M250 246V279" stroke="#c1bbd2" stroke-width="1.600"/>
<path d="M272 250V279M286 250V279M338 250V279M350 250V279M379 246V279" stroke="#bcb5d0" stroke-width="3.200"/>
<path d="M276 250V279M290 250V279M342 250V279M354 250V279" stroke="#d8d3e2" stroke-width="1.500"/>
<path d="M270 256H292M336 256H356" stroke="#c8c2d8" stroke-width="2"/>
<circle cx="313" cy="268" r="7.500" fill="#d9d4e4" stroke="#bdb7cf" stroke-width=".8"/><path d="M306 266C310 268 316 268 320 266M307 271C311 273 316 273 319 271M313 260.500V275.500" stroke="#c2bcd4" stroke-width=".6" fill="none"/><rect x="307" y="275" width="12" height="4" fill="#cec8da"/>
<path d="M211 243Q306 261 415 241L409 245.500Q306 268 217 246.500Z" fill="#b8b2cf"/>
<path d="M217 246.500Q306 268 409 245.500L405 247Q306 271 222 248.500Z" fill="#d2cde0"/>
<path d="M170 279H424V284H170Z" fill="url(#fadeL)"/>
</svg>
<div class="a" style="left:0;bottom:0;width:100%;height:6.04953px;background:#8b0550"></div>
<div class="a" style="left:4.92925px;bottom:1.45637px;width:3.36085px;height:3.36085px;border-radius:50%;background:#e6a878"></div>
<div class="a" style="left:9.85849px;bottom:2.46462px;width:8.51415px;height:0.896226px;background:rgba(255,255,255,.55)"></div>
</div>
<span class="t" style="left:65.5px;top:314.8px;font-size:5.2px;font-weight:bold;color:#9b1260;transform:translateX(-50%)">经济学院统计系教工党支部</span>
<span class="t" style="left:65.5px;top:321.8px;font-size:5.2px;font-weight:bold;color:#9b1260;transform:translateX(-50%)">集中学习</span>
<span class="t" style="left:28px;top:334.7px;font-size:4.15px;font-weight:bold;color:#9b1260"><span style="display:inline-block;width:11.62px"><span style="display:inline-block;transform:translateY(-0.900px) scaleX(1.400);transform-origin:0 50%">——</span></span>习近平总书记在中央全面深化改革委员</span>
<span class="t" style="left:28px;top:340.8px;font-size:4.15px;font-weight:bold;color:#9b1260">会第二十四次会议上发表的重要讲话精神</span>
<span class="t" style="left:2px;top:380px;font-size:12px;color:#333">3</span>
<div class="a" style="left:20px;top:384px;width:95px;height:70px;background:linear-gradient(#fff 0,#fff 28%,#faf3f5 62%,#f3e5ea 100%);overflow:hidden;border-radius:2px;box-shadow:0 0 2px rgba(0,0,0,.25)">
<svg style="left:0;top:0" width="95" height="70" viewBox="0 0 424 318"><defs><linearGradient id="fadeL" x1="0" y1="0" x2="1" y2="0"><stop offset="0" stop-color="#ddd6ea" stop-opacity="0"/><stop offset=".45" stop-color="#ddd6ea" stop-opacity=".8"/><stop offset="1" stop-color="#d9d2e8"/></linearGradient></defs><path d="M424 222L330 250L424 262Z" fill="#ead6ee" opacity=".7"/>
<path d="M424 232L300 262L424 275Z" fill="#e6d8f0" opacity=".6"/>
<path d="M150 291C230 278 330 274 424 272V291H150Z" fill="url(#fadeL)"/>
<rect x="359" y="222" width="40" height="56" fill="#dedae6"/><rect x="365" y="218" width="30" height="5" fill="#d2cede"/><rect x="359" y="222" width="7" height="56" fill="#cfcadb"/>
<path d="M368 227H397M368 232H397M368 237H397M368 242H397M368 247H397M368 252H397M368 257H397M368 262H397M368 267H397" stroke="#beb8d0" stroke-width="1.600"/>
<path d="M372 224V272M379 224V272M386 224V272M393 224V272" stroke="#e6e2ee" stroke-width="1"/>
<rect x="392" y="257" width="32" height="22" fill="#e2deea"/><rect x="398" y="252" width="20" height="6" fill="#dad5e4"/>
<path d="M396 265H424" stroke="#c4bed4" stroke-width="1.500"/>
<rect x="366" y="262" width="30" height="17" fill="#ddd8e6"/><path d="M370 268H394" stroke="#bcb6cc" stroke-width="2"/>
<rect x="217" y="260" width="50" height="18" fill="#e0dce8"/><rect x="217" y="258" width="50" height="3" fill="#cbc5d8"/><path d="M224 267H246" stroke="#b4aec8" stroke-width="3" stroke-dasharray="3 2.500"/><rect x="253" y="265" width="6" height="7" fill="#b4aec8"/>
<path d="M243 246V279M250 246V279" stroke="#c1bbd2" stroke-width="1.600"/>
<path d="M272 250V279M286 250V279M338 250V279M350 250V279M379 246V279" stroke="#bcb5d0" stroke-width="3.200"/>
<path d="M276 250V279M290 250V279M342 250V279M354 250V279" stroke="#d8d3e2" stroke-width="1.500"/>
<path d="M270 256H292M336 256H356" stroke="#c8c2d8" stroke-width="2"/>
<circle cx="313" cy="268" r="7.500" fill="#d9d4e4" stroke="#bdb7cf" stroke-width=".8"/><path d="M306 266C310 268 316 268 320 266M307 271C311 273 316 273 319 271M313 260.500V275.500" stroke="#c2bcd4" stroke-width=".6" fill="none"/><rect x="307" y="275" width="12" height="4" fill="#cec8da"/>
<path d="M211 243Q306 261 415 241L409 245.500Q306 268 217 246.500Z" fill="#b8b2cf"/>
<path d="M217 246.500Q306 268 409 245.500L405 247Q306 271 222 248.500Z" fill="#d2cde0"/>
<path d="M170 279H424V284H170Z" fill="url(#fadeL)"/>
</svg>
<div class="a" style="left:0;bottom:0;width:100%;height:6.04953px;background:#8b0550"></div>
<div class="a" style="left:4.92925px;bottom:1.45637px;width:3.36085px;height:3.36085px;border-radius:50%;background:#e6a878"></div>
<div class="a" style="left:9.85849px;bottom:2.46462px;width:8.51415px;height:0.896226px;background:rgba(255,255,255,.55)"></div>
</div>
<span class="t" style="left:65.5px;top:401.8px;font-size:5.2px;font-weight:bold;color:#9b1260;transform:translateX(-50%)">经济学院统计系教工党支部</span>
<span class="t" style="left:65.5px;top:408.8px;font-size:5.2px;font-weight:bold;color:#9b1260;transform:translateX(-50%)">集中学习</span>
<span class="t" style="left:66px;top:418px;font-size:4.15px;font-weight:bold;color:#9b1260;transform:translateX(-50%)"><span style="display:inline-block;width:11.62px"><span style="display:inline-block;transform:translateY(-0.900px) scaleX(1.400);transform-origin:0 50%">——</span></span>习近平总书记在2022年春季学期中央</span>
<span class="t" style="left:66px;top:423.2px;font-size:4.15px;font-weight:bold;color:#9b1260;transform:translateX(-50%)">党校（国家行政学院）中青年干部培训班开班式</span>
<span class="t" style="left:66px;top:428.4px;font-size:4.15px;font-weight:bold;color:#9b1260;transform:translateX(-50%)">上发表的重要讲话精神</span>
<div class="a" style="left:20px;top:471px;width:95px;height:70px;background:linear-gradient(#fff 0,#fff 28%,#faf3f5 62%,#f3e5ea 100%);overflow:hidden;border-radius:2px;box-shadow:0 0 2px rgba(0,0,0,.25)">
<svg style="left:0;top:0" width="95" height="70" viewBox="0 0 424 318"><defs><linearGradient id="fadeL" x1="0" y1="0" x2="1" y2="0"><stop offset="0" stop-color="#ddd6ea" stop-opacity="0"/><stop offset=".45" stop-color="#ddd6ea" stop-opacity=".8"/><stop offset="1" stop-color="#d9d2e8"/></linearGradient></defs><path d="M424 222L330 250L424 262Z" fill="#ead6ee" opacity=".7"/>
<path d="M424 232L300 262L424 275Z" fill="#e6d8f0" opacity=".6"/>
<path d="M150 291C230 278 330 274 424 272V291H150Z" fill="url(#fadeL)"/>
<rect x="359" y="222" width="40" height="56" fill="#dedae6"/><rect x="365" y="218" width="30" height="5" fill="#d2cede"/><rect x="359" y="222" width="7" height="56" fill="#cfcadb"/>
<path d="M368 227H397M368 232H397M368 237H397M368 242H397M368 247H397M368 252H397M368 257H397M368 262H397M368 267H397" stroke="#beb8d0" stroke-width="1.600"/>
<path d="M372 224V272M379 224V272M386 224V272M393 224V272" stroke="#e6e2ee" stroke-width="1"/>
<rect x="392" y="257" width="32" height="22" fill="#e2deea"/><rect x="398" y="252" width="20" height="6" fill="#dad5e4"/>
<path d="M396 265H424" stroke="#c4bed4" stroke-width="1.500"/>
<rect x="366" y="262" width="30" height="17" fill="#ddd8e6"/><path d="M370 268H394" stroke="#bcb6cc" stroke-width="2"/>
<rect x="217" y="260" width="50" height="18" fill="#e0dce8"/><rect x="217" y="258" width="50" height="3" fill="#cbc5d8"/><path d="M224 267H246" stroke="#b4aec8" stroke-width="3" stroke-dasharray="3 2.500"/><rect x="253" y="265" width="6" height="7" fill="#b4aec8"/>
<path d="M243 246V279M250 246V279" stroke="#c1bbd2" stroke-width="1.600"/>
<path d="M272 250V279M286 250V279M338 250V279M350 250V279M379 246V279" stroke="#bcb5d0" stroke-width="3.200"/>
<path d="M276 250V279M290 250V279M342 250V279M354 250V279" stroke="#d8d3e2" stroke-width="1.500"/>
<path d="M270 256H292M336 256H356" stroke="#c8c2d8" stroke-width="2"/>
<circle cx="313" cy="268" r="7.500" fill="#d9d4e4" stroke="#bdb7cf" stroke-width=".8"/><path d="M306 266C310 268 316 268 320 266M307 271C311 273 316 273 319 271M313 260.500V275.500" stroke="#c2bcd4" stroke-width=".6" fill="none"/><rect x="307" y="275" width="12" height="4" fill="#cec8da"/>
<path d="M211 243Q306 261 415 241L409 245.500Q306 268 217 246.500Z" fill="#b8b2cf"/>
<path d="M217 246.500Q306 268 409 245.500L405 247Q306 271 222 248.500Z" fill="#d2cde0"/>
<path d="M170 279H424V284H170Z" fill="url(#fadeL)"/>
</svg>
<div class="a" style="left:0;bottom:0;width:100%;height:6.04953px;background:#8b0550"></div>
<div class="a" style="left:4.92925px;bottom:1.45637px;width:3.36085px;height:3.36085px;border-radius:50%;background:#e6a878"></div>
<div class="a" style="left:9.85849px;bottom:2.46462px;width:8.51415px;height:0.896226px;background:rgba(255,255,255,.55)"></div>
</div>
<span class="t" style="left:65.5px;top:488.8px;font-size:5.2px;font-weight:bold;color:#9b1260;transform:translateX(-50%)">经济学院统计系教工党支部</span>
<span class="t" style="left:65.5px;top:495.8px;font-size:5.2px;font-weight:bold;color:#9b1260;transform:translateX(-50%)">集中学习</span>
<span class="t" style="left:28px;top:509px;font-size:4.15px;font-weight:bold;color:#9b1260"><span style="display:inline-block;width:11.62px"><span style="display:inline-block;transform:translateY(-0.900px) scaleX(1.400);transform-origin:0 50%">——</span></span>习近平总书记在参加内蒙古代表团审议</span>
<span class="t" style="left:65px;top:514.8px;font-size:4.15px;font-weight:bold;color:#9b1260;transform:translateX(-50%)">时发表的重要讲话精神</span>
<div class="a" style="left:129px;top:177px;width:13px;height:355px;background:#e6e6e6"></div>
<div class="a" style="left:129px;top:177px;width:13px;height:12px;background:#fff;border:1px solid #e2e2e2"></div>
<svg style="left:132.5px;top:181px" width="6" height="4" viewBox="0 0 6 4"><path d="M0 3.500L3 0.300L6 3.500Z" fill="#666"/></svg>
<div class="a" style="left:129px;top:190px;width:13px;height:154px;background:#fff;border:1px solid #dadada"></div>
<div class="a" style="left:129px;top:519px;width:13px;height:13px;background:#fff;border:1px solid #e2e2e2"></div>
<svg style="left:132.5px;top:524px" width="6" height="4" viewBox="0 0 6 4"><path d="M0 0.300L3 3.500L6 0.300Z" fill="#666"/></svg>
<div class="a" style="left:144px;top:177px;width:1px;height:355px;background:#e6e6e6"></div>
<div class="a" style="left:0;top:463.500px;width:23.300px;height:26.300px;background:rgba(128,128,128,.86);border-radius:0 4px 4px 0"></div>
<svg style="left:0px;top:469.5px" width="15" height="14" viewBox="0 0 15 14"><path d="M4 1.500H15M4 7H15M4 12.500H15" stroke="#fff" stroke-width="1.500"/><path d="M0 1.500H2M0 7H2M0 12.500H2" stroke="#fff" stroke-width="1.500"/></svg>
<span class="t" style="left:2px;top:467px;font-size:12px;color:#333">4</span>
<div class="a" style="left:334px;top:183px;width:424px;height:317.6px;background:linear-gradient(#fff 0,#fff 28%,#faf3f5 62%,#f3e5ea 100%);overflow:hidden;border-radius:0px;box-shadow:0 0 2px rgba(0,0,0,.25)">
<svg style="left:0;top:0" width="424" height="317.6" viewBox="0 0 424 318"><defs><linearGradient id="fadeL" x1="0" y1="0" x2="1" y2="0"><stop offset="0" stop-color="#ddd6ea" stop-opacity="0"/><stop offset=".45" stop-color="#ddd6ea" stop-opacity=".8"/><stop offset="1" stop-color="#d9d2e8"/></linearGradient></defs><path d="M424 222L330 250L424 262Z" fill="#ead6ee" opacity=".7"/>
<path d="M424 232L300 262L424 275Z" fill="#e6d8f0" opacity=".6"/>
<path d="M150 291C230 278 330 274 424 272V291H150Z" fill="url(#fadeL)"/>
<rect x="359" y="222" width="40" height="56" fill="#dedae6"/><rect x="365" y="218" width="30" height="5" fill="#d2cede"/><rect x="359" y="222" width="7" height="56" fill="#cfcadb"/>
<path d="M368 227H397M368 232H397M368 237H397M368 242H397M368 247H397M368 252H397M368 257H397M368 262H397M368 267H397" stroke="#beb8d0" stroke-width="1.600"/>
<path d="M372 224V272M379 224V272M386 224V272M393 224V272" stroke="#e6e2ee" stroke-width="1"/>
<rect x="392" y="257" width="32" height="22" fill="#e2deea"/><rect x="398" y="252" width="20" height="6" fill="#dad5e4"/>
<path d="M396 265H424" stroke="#c4bed4" stroke-width="1.500"/>
<rect x="366" y="262" width="30" height="17" fill="#ddd8e6"/><path d="M370 268H394" stroke="#bcb6cc" stroke-width="2"/>
<rect x="217" y="260" width="50" height="18" fill="#e0dce8"/><rect x="217" y="258" width="50" height="3" fill="#cbc5d8"/><path d="M224 267H246" stroke="#b4aec8" stroke-width="3" stroke-dasharray="3 2.500"/><rect x="253" y="265" width="6" height="7" fill="#b4aec8"/>
<path d="M243 246V279M250 246V279" stroke="#c1bbd2" stroke-width="1.600"/>
<path d="M272 250V279M286 250V279M338 250V279M350 250V279M379 246V279" stroke="#bcb5d0" stroke-width="3.200"/>
<path d="M276 250V279M290 250V279M342 250V279M354 250V279" stroke="#d8d3e2" stroke-width="1.500"/>
<path d="M270 256H292M336 256H356" stroke="#c8c2d8" stroke-width="2"/>
<circle cx="313" cy="268" r="7.500" fill="#d9d4e4" stroke="#bdb7cf" stroke-width=".8"/><path d="M306 266C310 268 316 268 320 266M307 271C311 273 316 273 319 271M313 260.500V275.500" stroke="#c2bcd4" stroke-width=".6" fill="none"/><rect x="307" y="275" width="12" height="4" fill="#cec8da"/>
<path d="M211 243Q306 261 415 241L409 245.500Q306 268 217 246.500Z" fill="#b8b2cf"/>
<path d="M217 246.500Q306 268 409 245.500L405 247Q306 271 222 248.500Z" fill="#d2cde0"/>
<path d="M170 279H424V284H170Z" fill="url(#fadeL)"/>
</svg>
<div class="a" style="left:0;bottom:0;width:100%;height:27px;background:#8b0550"></div>
<svg style="left:22px;top:295px" width="16" height="16" viewBox="0 0 16 16"><circle cx="8" cy="8" r="7.800" fill="#f4e2d2"/><circle cx="8" cy="8" r="6" fill="#c83a2a"/><circle cx="8" cy="8" r="4.600" fill="#f6d070"/><path d="M4.500 9.500C6 7 10 7 11.500 9.500L10.500 11H5.500Z" fill="#c8402a"/><circle cx="8" cy="6" r="1.300" fill="#d8502a"/></svg>
<span class="t" style="left:44px;top:297px;font-size:8.600px;color:#fff;font-style:italic;font-weight:bold;font-family:'Noto Serif CJK SC',serif;letter-spacing:-0.800px;transform:skewX(-10deg)">南京财经大学</span>
<span class="t" style="left:44px;top:308.5px;font-size:2.300px;color:#e6c4d6;letter-spacing:0.050px">NANJING UNIVERSITY OF FINANCE &amp; ECONOMICS</span>
</div>
<span class="t" style="left:539px;top:264px;font-size:23.5px;font-weight:bold;color:#9b1260;transform:translateX(-50%)">经济学院统计系教工党支部</span>
<span class="t" style="left:539px;top:292px;font-size:23.5px;font-weight:bold;color:#9b1260;transform:translateX(-50%)">集中学习</span>
<span class="t" style="left:370.7px;top:353.8px;font-size:18.85px;font-weight:bold;color:#9b1260"><span style="display:inline-block;width:51.300px"><span style="display:inline-block;transform:translateY(-3.800px) scaleX(1.372);transform-origin:0 50%;-webkit-text-stroke:0.9px #9b1260">——</span></span>习近平总书记在中央全面深化改革委员</span>
<span class="t" style="left:370.7px;top:376px;font-size:18.85px;font-weight:bold;color:#9b1260">会第二十四次会议上发表的重要讲话精神</span>
<div class="a" style="left:947px;top:177px;width:12px;height:290px;background:#e6e6e6"></div>
<div class="a" style="left:947px;top:177px;width:12px;height:13px;background:#fff;border:1px solid #e2e2e2"></div>
<svg style="left:950px;top:181.5px" width="6" height="4" viewBox="0 0 6 4"><path d="M0 3.500L3 0.300L6 3.500Z" fill="#666"/></svg>
<div class="a" style="left:947px;top:223px;width:12px;height:33px;background:#fff;border:1px solid #dadada"></div>
<div class="a" style="left:947px;top:455px;width:12px;height:11px;background:#fff;border:1px solid #e2e2e2"></div>
<svg style="left:950px;top:459px" width="6" height="4" viewBox="0 0 6 4"><path d="M0 0.300L3 3.500L6 0.300Z" fill="#666"/></svg>
<svg style="left:950px;top:470px" width="6" height="7" viewBox="0 0 6 7"><path d="M0 3L3 0L6 3ZM0 6.500L3 3.500L6 6.500Z" fill="#555"/></svg>
<svg style="left:950px;top:483px" width="6" height="7" viewBox="0 0 6 7"><path d="M0 0.500L3 3.500L6 0.500ZM0 4L3 7L6 4Z" fill="#555"/></svg>
<div class="a" style="left:144px;top:508px;width:803px;height:1px;background:#dedede"></div>
<span class="t" style="left:152.8px;top:514.5px;font-size:11.100px;color:#555">单击此处添加备注</span>
<div class="a" style="left:947px;top:511px;width:12px;height:10px;background:#fff;border:1px solid #e2e2e2"></div>
<svg style="left:950px;top:514px" width="6" height="4" viewBox="0 0 6 4"><path d="M0 3.500L3 0.300L6 3.500Z" fill="#666"/></svg>
<div class="a" style="left:947px;top:522px;width:12px;height:10px;background:#fff;border:1px solid #e2e2e2"></div>
<svg style="left:950px;top:525.5px" width="6" height="4" viewBox="0 0 6 4"><path d="M0 0.300L3 3.500L6 0.300Z" fill="#666"/></svg>
<div class="a" style="left:0;top:532px;width:959px;height:18px;background:#f3f3f3"></div>
<span class="t" style="left:-3px;top:536.5px;font-size:9.600px;color:#444">幻灯片 第 2 张, 共 8 张</span>
<svg style="left:106px;top:536px" width="12" height="10" viewBox="0 0 12 10"><path d="M0.500 1H4.500C5.500 1 6 1.500 6 2.500C6 1.500 6.500 1 7.500 1H11.500V8H7.500C6.500 8 6 8.500 6 9.500C6 8.500 5.500 8 4.500 8H0.500ZM6 2.500V9.500" fill="none" stroke="#444" stroke-width=".9"/></svg>
<span class="t" style="left:130.8px;top:536.5px;font-size:9.200px;color:#444">中文(中国)</span>
<svg style="left:184px;top:535px" width="11" height="12" viewBox="0 0 11 12"><circle cx="5" cy="1.800" r="1.300" fill="none" stroke="#444" stroke-width=".9"/><path d="M0.500 4.500H9.500M5 4.500V7.500M5 7.500L2.500 11.500M5 7.500L6.500 9.500" fill="none" stroke="#444" stroke-width=".9"/><path d="M6.500 8L10.500 11.500M10.500 8L6.500 11.500" stroke="#444" stroke-width=".9"/></svg>
<span class="t" style="left:198px;top:536.8px;font-size:9.150px;color:#444">辅助功能: 调查</span>
<svg style="left:642px;top:535px" width="12" height="11" viewBox="0 0 12 11"><path d="M0 6.500H12M0 9H12M0 11H12" stroke="#444" stroke-width=".9"/><path d="M3.500 4L6 1.500L8.500 4" fill="none" stroke="#444" stroke-width=".9"/></svg>
<span class="t" style="left:656px;top:536px;font-size:9.500px;color:#333">备注</span>
<div class="a" style="left:688px;top:532px;width:30px;height:18px;background:#dcdcdc"></div>
<svg style="left:697px;top:536.5px" width="11" height="9" viewBox="0 0 11 9"><rect x="0.500" y="0.500" width="10" height="8" fill="none" stroke="#444" stroke-width="1"/><rect x="2.500" y="2.500" width="6" height="4" fill="none" stroke="#444" stroke-width=".9"/><path d="M2.500 0.500V8.500" stroke="#444" stroke-width=".9"/></svg>
<svg style="left:728px;top:536px" width="10" height="10" viewBox="0 0 10 10"><rect x="0.500" y="0.500" width="3.500" height="3.500" fill="none" stroke="#444" stroke-width=".9"/><rect x="6" y="0.500" width="3.500" height="3.500" fill="none" stroke="#444" stroke-width=".9"/><rect x="0.500" y="6" width="3.500" height="3.500" fill="none" stroke="#444" stroke-width=".9"/><rect x="6" y="6" width="3.500" height="3.500" fill="none" stroke="#444" stroke-width=".9"/></svg>
<svg style="left:758px;top:536px" width="10" height="10" viewBox="0 0 10 10"><path d="M0.500 0.500H4.500V9.500H0.500ZM5.500 0.500H9.500V9.500H5.500ZM2 2.500V7.500M3.200 2.500V7.500M7 2.500V7.500M8.200 2.500V7.500" fill="none" stroke="#444" stroke-width=".8"/></svg>
<svg style="left:788px;top:536px" width="10" height="11" viewBox="0 0 10 11"><path d="M0 0.500H10M1.500 0.500V5.500H8.500V0.500M5 5.500V9.500M2.500 10H7.500" fill="none" stroke="#444" stroke-width=".9"/></svg>
<div class="a" style="left:813px;top:541px;width:4px;height:1px;background:#777"></div>
<div class="a" style="left:823px;top:541px;width:74px;height:1px;background:#666"></div>
<div class="a" style="left:842px;top:536.500px;width:3px;height:9px;background:#444"></div>
<div class="a" style="left:860px;top:539px;width:1px;height:5px;background:#666"></div>
<svg style="left:901px;top:538.5px" width="6" height="6" viewBox="0 0 6 6"><path d="M0 3H6M3 0V6" stroke="#777" stroke-width=".9"/></svg>
<span class="t" style="left:915px;top:536.5px;font-size:9.500px;color:#444">59%</span>
<svg style="left:945px;top:535.5px" width="12" height="12" viewBox="0 0 12 12"><rect x="3.500" y="3.500" width="5" height="5" fill="none" stroke="#444" stroke-width=".9"/><path d="M6 0.300L4.300 2.200H7.700ZM6 11.700L4.300 9.800H7.700ZM0.300 6L2.200 4.300V7.700ZM11.700 6L9.800 4.300V7.700Z" fill="none" stroke="#444" stroke-width=".7"/></svg>
<div class="a" style="left:945px;top:296px;width:14px;height:36px;background:#58595c;border-radius:4px 0 0 4px"></div>
<svg style="left:950px;top:309px" width="5" height="10" viewBox="0 0 5 10"><path d="M0.500 0.500L4.500 5L0.500 9.500" fill="none" stroke="#ddd" stroke-width="1.100"/></svg>
</div></div>
<div id="side" class="a"><div class="a" style="left:-959px;top:-53.500px;width:1120px;height:612px">
<svg style="left:0;top:0" width="0" height="0"><defs><filter id="avbl" x="-10%" y="-10%" width="120%" height="120%"><feGaussianBlur stdDeviation="0.550"/></filter><linearGradient id="a1s" x1="0" y1="0" x2="0" y2="1"><stop offset="0" stop-color="#5478ab"/><stop offset="1" stop-color="#a3b9d5"/></linearGradient><radialGradient id="a5s" cx="32" cy="11" r="26" gradientUnits="userSpaceOnUse"><stop offset="0" stop-color="#fffef2"/><stop offset=".28" stop-color="#fff0b4"/><stop offset=".6" stop-color="#f8cc64"/><stop offset="1" stop-color="#e2a048"/></radialGradient><linearGradient id="a5g" x1="0" y1="0" x2="0" y2="1"><stop offset="0" stop-color="#cdb4a0"/><stop offset="1" stop-color="#8a826c"/></linearGradient></defs></svg>
<div class="a" style="left:967px;top:50px;width:147px;height:82px;background:#232427;border:1px solid #1fa150;border-radius:3px;overflow:hidden">
<div class="a" style="left:50px;top:11.3px;width:44px;height:44px;border-radius:50%;overflow:hidden"><svg style="left:0;top:0" width="44" height="44" viewBox="0 0 44 44"><g filter="url(#avbl)"><rect x="-4" y="-4" width="52" height="22" fill="url(#a1s)"/><ellipse cx="9" cy="11" rx="9" ry="2.500" fill="#cbd6e6" opacity=".85"/><ellipse cx="33" cy="9" rx="9" ry="2.200" fill="#bccbe0" opacity=".7"/><ellipse cx="22" cy="14.500" rx="12" ry="1.800" fill="#d6dfea" opacity=".8"/><path d="M-4 16.300L6 15.300L14 16.800L-4 17.800Z" fill="#4f6688"/><rect x="-4" y="17.200" width="52" height="3.300" fill="#2b8da2"/><rect x="-4" y="20" width="52" height="5.500" fill="#56beb9"/><path d="M24 21.500H48M-4 23H18M28 23.500H48" stroke="#e8f6f4" stroke-width=".9"/><path d="M-4 24.500C10 23.500 22 26.500 48 24.800V29.500C30 30.500 15 28.500 -4 29.500Z" fill="#eaf4f2"/><rect x="-4" y="28.800" width="52" height="3.200" fill="#dab898"/><rect x="-4" y="31.500" width="52" height="17" fill="#ecc8a4"/><path d="M17.800 19C16.800 23 16.300 30 16 37.500H22C22.300 30 22 23 21 19Z" fill="#c41727"/><path d="M16.300 17L18.300 19.800M22.500 17L20.500 19.800" stroke="#b81828" stroke-width="1.500"/><circle cx="19.400" cy="16.500" r="2.300" fill="#3a2622"/><path d="M18.300 37.500V41.500M20.200 37.500V41" stroke="#d6a07e" stroke-width=".9"/></g></svg></div>
</div>
<div class="a" style="left:968px;top:111px;width:115px;height:19px;background:#0b0b0b"></div>
<svg style="left:969.5px;top:114.5px" width="12" height="11" viewBox="0 0 12 11"><rect x="0" y="0" width="12" height="8.500" rx="1" fill="#fff"/><path d="M3 11H9" stroke="#fff" stroke-width="1.400"/><path d="M3.500 6.500C4 4.500 5.500 3.800 7 3.800V2.300L9.300 4.500L7 6.700V5.200C5.500 5.200 4.500 5.600 3.500 6.500Z" fill="#111"/></svg>
<svg style="left:988.5px;top:114px" width="10" height="13" viewBox="0 0 10 13"><rect x="2.500" y="0" width="5" height="8.500" rx="2.500" fill="#fff"/><path d="M2.500 4.500H7.500V6C7.500 9.300 2.500 9.300 2.500 6Z" fill="#2fd65a"/><path d="M0.700 6.500C0.700 9.800 3 10.800 5 10.800C7 10.800 9.300 9.800 9.300 6.500M5 10.800V12.500" stroke="#fff" fill="none" stroke-width="1.100"/></svg>
<span class="t" style="left:1004px;top:115.8px;font-size:9.700px;color:#fff">美味汤的屏幕共享</span>
<div class="a" style="left:1012px;top:62.500px;width:63px;height:17px;background:rgba(34,36,40,.38);border-radius:2px"></div>
<svg style="left:1038px;top:68px" width="10" height="6" viewBox="0 0 10 6"><path d="M0.500 5.500L5 1L9.500 5.500" fill="none" stroke="#d2d6de" stroke-width="1"/></svg>
<div class="a" style="left:967px;top:138.5px;width:147px;height:82px;background:#232427;border:1px solid #3a3c40;border-radius:3px;overflow:hidden">
<div class="a" style="left:50px;top:11.3px;width:44px;height:44px;border-radius:50%;overflow:hidden"><svg style="left:0;top:0" width="44" height="44" viewBox="0 0 44 44"><g filter="url(#avbl)"><rect x="-4" y="-4" width="52" height="52" fill="#4a3c1c"/><rect x="-4" y="-4" width="52" height="18" fill="#3a3418"/><path d="M0 8H30V10H0ZM0 14H28V16.500H0ZM0 21H14V24H0ZM0 28H12V31H0Z" fill="#8a7a48"/><path d="M30 -4H36L38.500 48H33Z" fill="#262624"/><path d="M36 6H48V26H37Z" fill="#6a5a30"/><path d="M11 48C7 36 9 27 15 23C13 16 17 10.500 23 10.500C28.500 10.500 31.500 15 30.500 20C35 20 37 25 33.500 28.500L27 33L25 48Z" fill="#c41c26"/><ellipse cx="22.500" cy="21.500" rx="4.800" ry="5.500" fill="#f0c6ae"/><path d="M18.500 18C22 14 29 14.500 32.500 17.500L31.500 21C28 18.500 23.500 18.500 20 20.500Z" fill="#d42c30"/><path d="M26 16C28 15 31 15.500 32 17L29 19Z" fill="#f0c6ae"/><path d="M22 47L40 29L48 33V48H22Z" fill="#30291a"/><path d="M15 41L35 25.500L40 29.500L21 47Z" fill="#8e7d58"/><path d="M19.500 31.500L26 28L27 31L20.500 34.500Z" fill="#ece4dc"/></g></svg></div>
</div>
<div class="a" style="left:968px;top:199.5px;width:74px;height:19px;background:#0b0b0b"></div>
<div class="a" style="left:969px;top:200px;width:18px;height:18px;background:#f5821f"></div>
<svg style="left:972px;top:203px" width="12" height="12" viewBox="0 0 12 12"><circle cx="6" cy="3.500" r="2.700" fill="#fff"/><path d="M0 12C0 8 3 6.500 6 6.500C9 6.500 12 8 12 12Z" fill="#fff"/></svg>
<svg style="left:993px;top:202.5px" width="11" height="13" viewBox="0 0 11 13"><rect x="3.200" y="0.500" width="4.600" height="8" rx="2.300" fill="#e8e8e8"/><path d="M1 6.500C1 9.800 3.200 10.800 5.500 10.800C7.800 10.800 10 9.800 10 6.500M5.500 10.800V12.500" stroke="#e8e8e8" fill="none" stroke-width="1.100"/><path d="M0.500 12L10.500 1" stroke="#e8413c" stroke-width="1.300"/></svg>
<span class="t" style="left:1010px;top:204.5px;font-size:9.700px;color:#fff">王平平</span>
<div class="a" style="left:967px;top:228px;width:147px;height:82px;background:#232427;border:1px solid #3a3c40;border-radius:3px;overflow:hidden">
<div class="a" style="left:50px;top:11.3px;width:44px;height:44px;border-radius:50%;overflow:hidden"><svg style="left:0;top:0" width="44" height="44" viewBox="0 0 44 44"><g filter="url(#avbl)"><rect x="-4" y="-4" width="52" height="52" fill="#c5c7cb"/><rect x="-4" y="36" width="52" height="12" fill="#b4b6ba"/><path d="M17 30L16.500 48H22L22.500 34L24 48H29.500L29 30Z" fill="#1c56a6"/><path d="M13 20C13 13 17 9.500 22 9.500C28 9.500 32.500 13 33 19L33.500 27C33.500 29 31 30 30 28L29.500 31.500H16.500L16 28C14 29.500 12.500 28 12.500 26Z" fill="#1f5cae"/><path d="M16.500 12C17 8 27 8 28.500 12L27 16H18Z" fill="#184c96"/><ellipse cx="21.500" cy="5.800" rx="5" ry="5.600" fill="#dcb49c"/><path d="M16.300 4.500C16.500 -1.500 27 -1.500 26.800 4.500C25 2 19 2 16.300 4.500Z" fill="#2a211e"/><rect x="25.500" y="16.500" width="3.800" height="3" fill="#e8d8c8"/><circle cx="19.500" cy="29.500" r="2.200" fill="#e8a818"/><path d="M19.800 31V35.500" stroke="#e8a818" stroke-width="1.300"/><rect x="26" y="36" width="2.500" height="3" fill="#d8c8c0"/></g></svg></div>
</div>
<div class="a" style="left:968px;top:289px;width:54px;height:19px;background:#0b0b0b"></div>
<svg style="left:973px;top:292px" width="11" height="13" viewBox="0 0 11 13"><rect x="3.200" y="0.500" width="4.600" height="8" rx="2.300" fill="#e8e8e8"/><path d="M1 6.500C1 9.800 3.200 10.800 5.500 10.800C7.800 10.800 10 9.800 10 6.500M5.500 10.800V12.500" stroke="#e8e8e8" fill="none" stroke-width="1.100"/><path d="M0.500 12L10.500 1" stroke="#e8413c" stroke-width="1.300"/></svg>
<span class="t" style="left:989.5px;top:294px;font-size:9.700px;color:#fff">白先春</span>
<div class="a" style="left:967px;top:317.5px;width:147px;height:82px;background:#232427;border:1px solid #3a3c40;border-radius:3px;overflow:hidden">
<div class="a" style="left:50px;top:11.3px;width:44px;height:44px;border-radius:50%;overflow:hidden"><svg style="left:0;top:0" width="44" height="44" viewBox="0 0 44 44"><g filter="url(#avbl)"><rect x="-4" y="-4" width="52" height="52" fill="#d8cdb2"/><rect x="-4" y="-4" width="52" height="26" fill="#e4dcc6"/><path d="M-4 22H48M8 -4V22M37 -4V22" stroke="#c8bc9c" stroke-width="1"/><rect x="4" y="21" width="3" height="1.500" fill="#d8b040"/><rect x="39" y="21" width="3" height="1.500" fill="#d8b040"/><path d="M3 48C4 36 9 30 15 28H31C38 30 42 37 42 48Z" fill="#cfd5e6"/><path d="M31 28C38 30 42 37 42 48H34Z" fill="#aab2cc"/><path d="M34 30L40 44M37 29L42 40" stroke="#eef0f6" stroke-width="1"/><path d="M11 48L13.500 29.500L19 27.500L22 35L26 27.500L32 29.500L33 48Z" fill="#e05a26"/><ellipse cx="22.500" cy="13.500" rx="9.300" ry="10.800" fill="#efc8ae"/><path d="M13 12.500C11.500 -1.500 34 -1.500 32.500 12.500C30 6.500 17 6 13 12.500Z" fill="#3c3e4c"/><circle cx="18.800" cy="15" r="1.100" fill="#222"/><circle cx="26.500" cy="15" r="1.100" fill="#222"/><path d="M19 23C21.500 20.500 27.500 20.500 30.500 24L28.500 30.500L21.500 29.500Z" fill="#efc8ae"/><ellipse cx="20.500" cy="38.500" rx="7.800" ry="5" fill="#a4aa8a" stroke="#eeeee6" stroke-width="1.300"/></g></svg></div>
</div>
<div class="a" style="left:968px;top:378.5px;width:62px;height:19px;background:#0b0b0b"></div>
<svg style="left:973px;top:381.5px" width="11" height="13" viewBox="0 0 11 13"><rect x="3.200" y="0.500" width="4.600" height="8" rx="2.300" fill="#e8e8e8"/><path d="M1 6.500C1 9.800 3.200 10.800 5.500 10.800C7.800 10.800 10 9.800 10 6.500M5.500 10.800V12.500" stroke="#e8e8e8" fill="none" stroke-width="1.100"/><path d="M0.500 12L10.500 1" stroke="#e8413c" stroke-width="1.300"/></svg>
<span class="t" style="left:989.5px;top:383.5px;font-size:9.700px;color:#fff">穆燕</span>
<svg style="left:1015px;top:383px" width="12" height="10" viewBox="0 0 12 10"><rect x="0" y="5" width="2.600" height="5" rx=".5" fill="#f03030"/><rect x="4.300" y="2.500" width="2.600" height="7.500" rx=".5" fill="#f2f2f2"/><rect x="8.600" y="0" width="2.600" height="10" rx=".5" fill="#f2f2f2"/></svg>
<div class="a" style="left:967px;top:407px;width:147px;height:82px;background:#232427;border:1px solid #3a3c40;border-radius:3px;overflow:hidden">
<div class="a" style="left:50px;top:11.3px;width:44px;height:44px;border-radius:50%;overflow:hidden"><svg style="left:0;top:0" width="44" height="44" viewBox="0 0 44 44"><g filter="url(#avbl)"><rect x="-4" y="-4" width="52" height="27" fill="url(#a5s)"/><rect x="-4" y="15" width="52" height="7" fill="#ecc4a4" opacity=".6"/><rect x="-4" y="21" width="52" height="28" fill="url(#a5g)"/><rect x="-4" y="22.500" width="18" height="3" fill="#e2d2c4"/><rect x="0" y="27.500" width="12" height="2.200" fill="#cfc0b2"/><rect x="-4" y="31.500" width="14" height="3" fill="#9a9e84"/><rect x="0" y="36.500" width="10" height="2" fill="#c8b4a6"/><path d="M31 21C37 19.500 48 20.500 48 22.500V48H31Z" fill="#6a5a2a"/><path d="M8 48C9 37 13 31 20 27.500L31 24C38 27 41 35 41 48Z" fill="#54565a"/><path d="M33 30C37.500 34 38.500 41 37.500 48H33Z" fill="#9a9c9e"/><path d="M13.500 31C14.500 24.500 18.500 20.500 24 20L32.500 18.500C33.500 21.500 31 24.500 28 25.500L20 28.500C18 31.500 16 36 14.500 39Z" fill="#d6a414"/><ellipse cx="24.800" cy="12.300" rx="6.300" ry="6.800" fill="#5e2e16"/><ellipse cx="21.300" cy="14.600" rx="3.200" ry="4.800" fill="#e89a5c"/><path d="M29.500 7.500C33.500 8 33.500 16 30.500 18" stroke="#ffe9a0" stroke-width="1.600" fill="none"/></g></svg></div>
</div>
<div class="a" style="left:968px;top:468px;width:54px;height:19px;background:#0b0b0b"></div>
<svg style="left:973px;top:471px" width="11" height="13" viewBox="0 0 11 13"><rect x="3.200" y="0.500" width="4.600" height="8" rx="2.300" fill="#e8e8e8"/><path d="M1 6.500C1 9.800 3.200 10.800 5.500 10.800C7.800 10.800 10 9.800 10 6.500M5.500 10.800V12.500" stroke="#e8e8e8" fill="none" stroke-width="1.100"/><path d="M0.500 12L10.500 1" stroke="#e8413c" stroke-width="1.300"/></svg>
<span class="t" style="left:989.5px;top:473px;font-size:9.700px;color:#fff">华中昱</span>
<div class="a" style="left:967px;top:496.5px;width:147px;height:82px;background:#232427;border:1px solid #3a3c40;border-radius:3px;overflow:hidden">
<div class="a" style="left:50px;top:11.3px;width:44px;height:44px;border-radius:50%;overflow:hidden"><div class="a" style="left:0;top:0;width:44px;height:44px;background:#0a6cff"></div><span class="t" style="left:6px;top:13px;font-size:16.500px;color:#fff">王芳</span></div>
</div>
<div class="a" style="left:1012px;top:527px;width:63px;height:17px;background:rgba(42,44,48,.72);border-radius:2px"></div>
<svg style="left:1034px;top:532px" width="12" height="7" viewBox="0 0 12 7"><path d="M0.800 1L6 6L11.200 1" fill="none" stroke="#fff" stroke-width="1.300"/></svg>
<div class="a" style="left:961px;top:303px;width:1px;height:24px;background:#8a8c90"></div><div class="a" style="left:964px;top:303px;width:1px;height:24px;background:#8a8c90"></div>
</div></div>
<div class="a" style="left:767px;top:32px;width:216px;height:32px;background:#35373c;border-radius:4px;box-shadow:0 1px 3px rgba(0,0,0,.3)">
<div class="a" style="left:32px;top:3px;width:1px;height:26px;background:#2a2c30"></div>
<svg style="left:12px;top:11px" width="10" height="14" viewBox="0 0 10 14"><rect x="3" y="0" width="4" height="8" rx="2" fill="#777"/><path d="M1 6.500C1 9.500 3 10.500 5 10.500C7 10.500 9 9.500 9 6.500M5 10.500V13M2.500 13.300H7.500" stroke="#777" fill="none" stroke-width="1"/><path d="M0 12L10 1" stroke="#e03c3c" stroke-width="1.200"/></svg>
<span class="t" style="left:39px;top:12.5px;color:#fff;font-size:10.3px">正在讲话: 美味汤;</span>
<svg style="left:133px;top:4px" width="52" height="24" viewBox="0 0 52 24"><path d="M0 16L12 3L20 12L12 22L6 22Z" fill="#45474c"/><path d="M14 16L30 0L46 16L38 24L22 24Z" fill="#4a4c51"/></svg>
</div>
<div class="a" style="left:0;top:550px;width:959px;height:3px;background:linear-gradient(#e8f0f5,#dbe9f1)"></div>
<div id="tool" class="a"></div>
<svg style="left:12px;top:559px" width="16" height="22" viewBox="0 0 16 22"><rect x="4.500" y="0" width="6.500" height="13" rx="3.250" fill="#3d3f44"/><path d="M1.500 9.500C1.500 14 4.500 16 7.750 16C11 16 14 14 14 9.500M7.750 16V20M3.500 20.500H12" fill="none" stroke="#3d3f44" stroke-width="1.400"/><path d="M0 18.500L15.500 3" stroke="#fff" stroke-width="2.600"/><path d="M0.500 18.500L15.500 3.500" stroke="#f03a3a" stroke-width="1.300"/></svg>
<span class="t" style="left:19.7px;top:583px;font-size:9.500px;color:#222;transform:translateX(-50%)">解除静音</span>
<svg style="left:45px;top:575px" width="8" height="5" viewBox="0 0 8 5"><path d="M0.500 4.500L4 1L7.500 4.500" fill="none" stroke="#333" stroke-width="1.200"/></svg>
<svg style="left:67px;top:563px" width="22" height="14" viewBox="0 0 22 14"><rect x="0" y="0" width="15" height="14" rx="1.500" fill="#3d3f44"/><path d="M15.500 5L21.500 1.500V12.500L15.500 9Z" fill="#3d3f44"/><path d="M1 14.500L16 -0.500" stroke="#fff" stroke-width="2.600"/><path d="M1 14.500L16 -0.500" stroke="#f03a3a" stroke-width="1.300"/></svg>
<span class="t" style="left:78px;top:583.5px;font-size:9.500px;color:#222;transform:translateX(-50%)">开启视频</span>
<svg style="left:102.5px;top:575px" width="8" height="5" viewBox="0 0 8 5"><path d="M0.500 4.500L4 1L7.500 4.500" fill="none" stroke="#333" stroke-width="1.200"/></svg>
<svg style="left:336px;top:563px" width="22" height="17" viewBox="0 0 22 17"><rect x="0" y="0" width="21.500" height="13.500" rx="1.500" fill="#3d3f44"/><path d="M5.500 16.500H16" stroke="#3d3f44" stroke-width="1.500"/><path d="M6.500 10C7.500 6.800 9.500 5.800 12 5.800V3.500L15.500 6.800L12 10V7.800C9.800 7.800 8 8.300 6.500 10Z" fill="#fff"/></svg>
<span class="t" style="left:347px;top:583.5px;font-size:9.500px;color:#222;transform:translateX(-50%)">共享屏幕</span>
<svg style="left:371.5px;top:575px" width="8" height="5" viewBox="0 0 8 5"><path d="M0.500 4.500L4 1L7.500 4.500" fill="none" stroke="#333" stroke-width="1.200"/></svg>
<svg style="left:396px;top:560.3px" width="16" height="19.6" viewBox="0 0 16 19.6"><path d="M8 0.500L15 3.300C15.400 3.500 15.600 3.800 15.600 4.200V11C15.600 15 12 18 8 19.500C4 18 0.400 15 0.400 11V4.200C0.400 3.800 0.600 3.500 1 3.300Z" fill="#3d3f44" stroke="#3d3f44" stroke-width=".8" stroke-linejoin="round"/><path d="M8 5.600L11.900 9L10.700 10.200L8 7.900L5.300 10.200L4.100 9ZM8 9.600L11.900 13L10.700 14.200L8 11.900L5.300 14.200L4.100 13Z" fill="#fff"/></svg>
<span class="t" style="left:404px;top:583.5px;font-size:9.500px;color:#222;transform:translateX(-50%)">安全</span>
<svg style="left:441.5px;top:560.8px" width="21" height="19" viewBox="0 0 21 19"><circle cx="9" cy="4.300" r="4" fill="#3d3f44"/><path d="M0.500 18.500C0.500 13 4 9.800 9 9.800C11 9.800 12.500 10.300 13.500 11.100C11 12.800 10.300 16 11.500 18.500Z" fill="#3d3f44"/><circle cx="15.100" cy="14" r="4.500" fill="#3d3f44" stroke="#fff" stroke-width="1"/><path d="M15.100 11.600V16.400M12.700 14H17.500" stroke="#fff" stroke-width="1.300"/></svg>
<span class="t" style="left:451px;top:583.5px;font-size:9.500px;color:#222;transform:translateX(-50%)">邀请</span>
<svg style="left:497px;top:561px" width="22" height="19" viewBox="0 0 22 19"><circle cx="10" cy="4.800" r="4.500" fill="#3d3f44"/><path d="M0.500 19C0.500 13 4 10 10 10C16 10 19.500 13 19.500 19Z" fill="#3d3f44"/><path d="M14 1C16.500 2.500 16.500 7 14 8.800M18 11.500C20 13 21 15.500 21 19" fill="none" stroke="#3d3f44" stroke-width="1.300"/></svg>
<span class="t" style="left:507px;top:583.5px;font-size:9.500px;color:#222;transform:translateX(-50%)">管理成员(15)</span>
<svg style="left:554px;top:563px" width="18" height="17" viewBox="0 0 18 17"><path d="M2 0H16C17.200 0 18 .8 18 2V11C18 12.200 17.200 13 16 13H15V16.500L10.500 13H2C.8 13 0 12.200 0 11V2C0 .8 .8 0 2 0Z" fill="#3d3f44"/><circle cx="5" cy="6.500" r="1.300" fill="#fff"/><circle cx="9" cy="6.500" r="1.300" fill="#fff"/><circle cx="13" cy="6.500" r="1.300" fill="#fff"/></svg>
<span class="t" style="left:563px;top:583.5px;font-size:9.500px;color:#222;transform:translateX(-50%)">聊天</span>
<svg style="left:601px;top:559.5px" width="21" height="21" viewBox="0 0 21 21"><circle cx="10.500" cy="10.500" r="9.600" fill="none" stroke="#3d3f44" stroke-width="1.400"/><circle cx="10.500" cy="10.500" r="7.300" fill="#3d3f44"/></svg>
<span class="t" style="left:611px;top:583.5px;font-size:9.500px;color:#222;transform:translateX(-50%)">录制</span>
<svg style="left:636.5px;top:575px" width="8" height="5" viewBox="0 0 8 5"><path d="M0.500 4.500L4 1L7.500 4.500" fill="none" stroke="#333" stroke-width="1.200"/></svg>
<svg style="left:662px;top:561px" width="21" height="18" viewBox="0 0 21 18"><rect x="5.500" y="0" width="9.500" height="7.500" rx="1.300" fill="#3d3f44"/><rect x="0" y="9.500" width="9.500" height="8" rx="1.300" fill="#3d3f44"/><rect x="11" y="9.500" width="9.500" height="8" rx="1.300" fill="#3d3f44"/></svg>
<span class="t" style="left:671.7px;top:583.5px;font-size:9.500px;color:#222;transform:translateX(-50%)">分组讨论</span>
<svg style="left:714px;top:561px" width="19" height="18" viewBox="0 0 19 18"><rect x="0" y="0" width="8" height="8" rx="1.300" fill="#3d3f44"/><rect x="0" y="10" width="8" height="8" rx="1.300" fill="#3d3f44"/><rect x="10" y="10" width="8" height="8" rx="1.300" fill="#3d3f44"/><rect x="10.800" y="0.800" width="6.400" height="6.400" rx="1" fill="none" stroke="#3d3f44" stroke-width="1.400" transform="rotate(45 14 4)"/></svg>
<span class="t" style="left:723px;top:583.5px;font-size:9.500px;color:#222;transform:translateX(-50%)">应用</span>
<svg style="left:761.5px;top:560.5px" width="20" height="20" viewBox="0 0 20 20"><path d="M19.90 8.59L19.90 11.41L17.36 11.89L16.54 13.87L18.00 16.00L16.00 18.00L13.87 16.54L11.89 17.36L11.41 19.90L8.59 19.90L8.11 17.36L6.13 16.54L4.00 18.00L2.00 16.00L3.46 13.87L2.64 11.89L0.10 11.41L0.10 8.59L2.64 8.11L3.46 6.13L2.00 4.00L4.00 2.00L6.13 3.46L8.11 2.64L8.59 0.10L11.41 0.10L11.89 2.64L13.87 3.46L16.00 2.00L18.00 4.00L16.54 6.13L17.36 8.11Z" fill="#3d3f44"/><circle cx="10" cy="10" r="4.100" fill="#fff"/></svg>
<span class="t" style="left:771px;top:583.5px;font-size:9.500px;color:#222;transform:translateX(-50%)">设置</span>
<div class="a" style="left:1043px;top:560px;width:68px;height:33px;border:1px solid #f3a9a9;border-radius:4px;background:#fff"></div>
<span class="t" style="left:1053px;top:571.8px;font-size:11.800px;color:#ee4646">结束会议</span>
<div id="task" class="a"></div>
<div class="a" style="left:34px;top:601px;width:303px;height:11px;background:#fff;border-top:1px solid #b8bcc0"></div>
<div class="a" style="left:751px;top:601px;width:37px;height:11px;background:#dcebf2"></div>
<div class="a" style="left:750px;top:601px;width:1px;height:11px;background:#b8c8d0"></div><div class="a" style="left:788px;top:601px;width:1px;height:11px;background:#b8c8d0"></div>
<div class="a" style="left:476px;top:606px;width:18px;height:18px;border-radius:50%;background:#e8222a"></div>
<div class="a" style="left:516px;top:607px;width:19px;height:14px;border-radius:3px;background:#e0262e"></div>
<div class="a" style="left:556.5px;top:607.5px;width:17px;height:17px;border-radius:50%;background:#e8483a"></div>
<div class="a" style="left:598px;top:608px;width:16px;height:16px;border-radius:50%;background:#6aa4dc"></div>
<div class="a" style="left:637px;top:610px;width:14px;height:14px;border-radius:50%;background:#6ad88a"></div>
<div class="a" style="left:680px;top:609px;width:17px;height:14px;border-radius:1px;background:#2a1a4a"></div>
<div class="a" style="left:723px;top:609px;width:15px;height:14px;border-radius:1px;background:#3a9ae8"></div>
<div class="a" style="left:761px;top:608px;width:16px;height:14px;border-radius:2px;background:#0a6cff"></div>
<div class="a" style="left:801.5px;top:607.5px;width:17px;height:17px;border-radius:50%;background:#e86a3a"></div>
<span class="t" style="left:1027px;top:604px;font-size:10.500px;color:#111">14:24</span>
<div class="a" style="left:1086px;top:610px;width:11px;height:2px;background:#333"></div>
<div class="a" style="left:17px;top:610.500px;width:3px;height:2px;background:#444"></div>
<div class="a" style="left:52px;top:611px;width:2px;height:1px;background:#555"></div>
<div class="a" style="left:437px;top:610px;width:5px;height:2px;background:#e8b030"></div>
<div class="a" style="left:365px;top:610px;width:4px;height:2px;background:#667"></div>
<div class="a" style="left:395px;top:610px;width:2px;height:2px;background:#667"></div>
<div class="a" style="left:853px;top:608px;width:12px;height:4px;background:repeating-linear-gradient(90deg,#7ab8ec 0 2px,transparent 2px 4px)"></div>
</div></body>
</html>
